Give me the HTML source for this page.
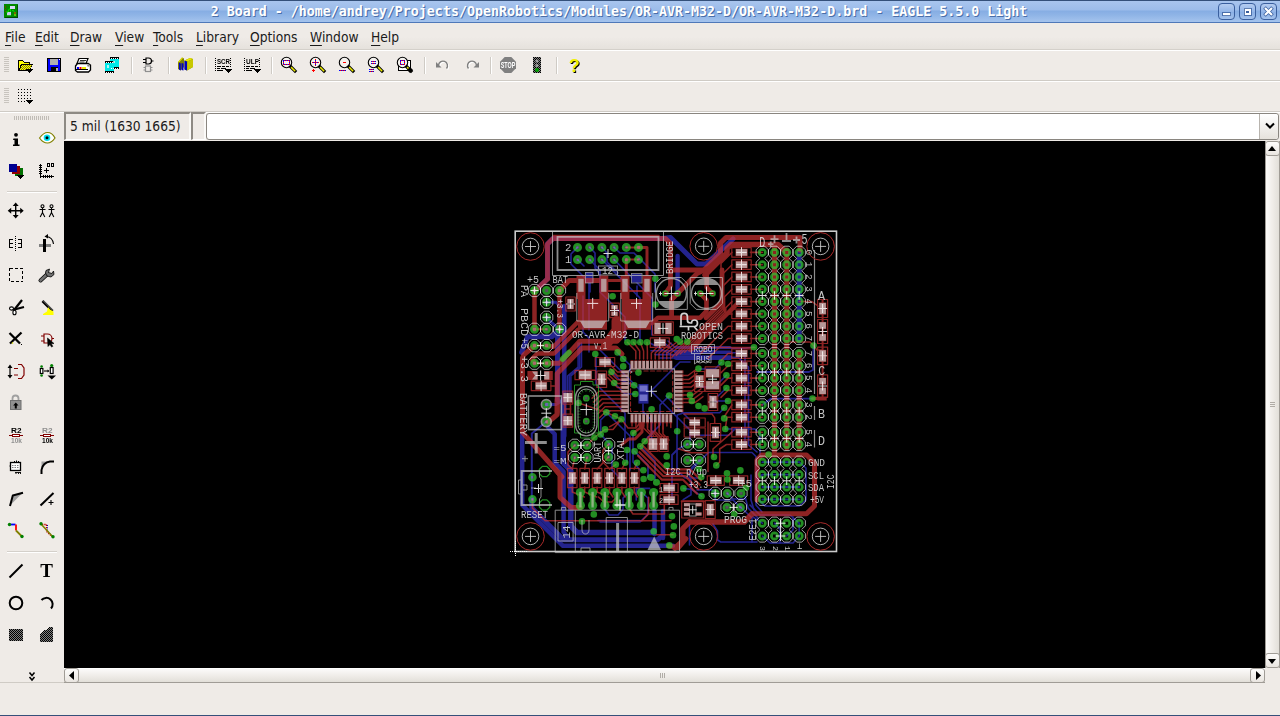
<!DOCTYPE html>
<html><head><meta charset="utf-8"><title>2 Board - EAGLE 5.5.0 Light</title>
<style>
html,body{margin:0;padding:0;}
body{width:1280px;height:716px;overflow:hidden;background:#efebe7;position:relative;font-family:"DejaVu Sans Condensed","DejaVu Sans","Liberation Sans",sans-serif;}
#title{position:absolute;left:0;top:0;width:1280px;height:23px;background:linear-gradient(#34507a 0,#34507a 1px,#a9c5ee 1px,#9cbceA 10px,#86ade3 11px,#8fb4e6 15px,#a4c3ed 21.8px,#4f78b8 21.8px,#4f78b8 22.8px,#e8e4e0 23px);box-sizing:border-box;}
#title .t{position:absolute;left:0;width:1238px;top:4px;text-align:center;font:bold 13.3px "DejaVu Sans Mono","Liberation Mono",monospace;color:#fff;white-space:pre;text-shadow:1px 1px 0 #4a6ea8;}
.wb{position:absolute;top:3px;width:17px;height:17px;border:1px solid #3a5f9e;border-radius:4px;box-sizing:border-box;background:linear-gradient(#b4ccf0,#94b6e8 50%,#88aee4 52%,#a4c2ec);}
#menubar{position:absolute;left:0;top:23px;width:1280px;height:28px;border-bottom:1px solid #fff;box-sizing:border-box;background:linear-gradient(#efebe7 0,#efebe7 14px,#e6e2dd 25.5px,#d4d0ca 26px,#d4d0ca 27px);}
#menubar span{position:absolute;top:6px;font-size:13.7px;line-height:17px;color:#1a1a1a;}
#menubar u{text-decoration:underline;text-underline-offset:2.5px;text-decoration-thickness:1px;}
.hl{position:absolute;left:0;width:1280px;height:1px;}
#coord{position:absolute;left:64px;top:112px;width:127px;height:28px;box-sizing:border-box;border:solid;border-width:2px 2px 1px 2px;border-color:#8e8a84 #fbfaf8 #fff #8e8a84;font-size:13.7px;line-height:24px;padding-left:4px;color:#1a1a1a;white-space:nowrap;}
#cmdl{position:absolute;left:191px;top:112px;width:15px;height:28px;box-sizing:border-box;border:solid;border-width:2px 2px 1px 2px;border-color:#8e8a84 #fbfaf8 #fff #8e8a84;}
#cmd{position:absolute;left:206px;top:112.5px;width:1073px;height:27px;box-sizing:border-box;border:1px solid #8a8680;border-radius:3px;background:#fff;}
#cmd i{position:absolute;right:0;top:0;width:18px;height:25px;background:linear-gradient(#fff,#e6e2dc);border-left:1px solid #b8b4ae;border-radius:0 3px 3px 0;}
#canvas{position:absolute;left:64px;top:141px;width:1201px;height:527px;background:#000;overflow:hidden;}
#vsb{position:absolute;left:1265px;top:141px;width:15px;height:527px;box-sizing:border-box;border-left:1px solid #a09c96;border-right:1px solid #a09c96;background:linear-gradient(90deg,#fbfaf9,#f0ede9 50%,#e2dfd9);}
#hsb{position:absolute;left:64px;top:668px;width:1201px;height:15px;box-sizing:border-box;border-bottom:1px solid #a09c96;border-top:1px solid #fff;background:linear-gradient(#fbfaf9,#f0ede9 50%,#e2dfd9);}
.sbb{position:absolute;width:15px;height:15px;box-sizing:border-box;border:1px solid #a09c96;border-radius:3px;background:linear-gradient(#fdfcfb,#e9e5e0);}
#chrome{position:absolute;left:0;top:0;}
#pcb{position:absolute;left:0;top:0;}
</style></head><body>
<div id="title"><div class="t">2 Board - /home/andrey/Projects/OpenRobotics/Modules/OR-AVR-M32-D/OR-AVR-M32-D.brd - EAGLE 5.5.0 Light</div>
<div class="wb" style="left:1218px"></div><div class="wb" style="left:1239px"></div><div class="wb" style="left:1260px"></div></div>
<div id="menubar">
<span style="left:5px"><u>F</u>ile</span><span style="left:35px"><u>E</u>dit</span><span style="left:70px"><u>D</u>raw</span><span style="left:115px"><u>V</u>iew</span><span style="left:153px"><u>T</u>ools</span><span style="left:196px"><u>L</u>ibrary</span><span style="left:250px"><u>O</u>ptions</span><span style="left:310px"><u>W</u>indow</span><span style="left:371px"><u>H</u>elp</span>
</div>
<div class="hl" style="top:80px;background:#cfcbc5"></div><div class="hl" style="top:81px;background:#fff"></div>
<div class="hl" style="top:111px;background:#cfcbc5"></div><div class="hl" style="top:112px;background:#fff"></div>
<div id="coord">5 mil (1630 1665)</div><div id="cmdl"></div><div id="cmd"><i></i></div>
<div id="canvas">
<svg id="pcb" width="1201" height="527" viewBox="64 141 1201 527">
<g opacity="0.706" stroke="#3232c8" fill="#3232c8" stroke-linecap="round" stroke-linejoin="round"><path d="M799.2 252 L799.2 341" stroke-width="5" fill="none"/><path d="M534.5 290.5 L538 288 L547.5 279 L547.5 244 L553 238.5 L662 238.5 L670.5 237.5 L697 264 L706 264 L733 239" stroke-width="5" fill="none"/><path d="M677.6 256 L677.6 293.5" stroke-width="4.4" fill="none"/><path d="M577.5 247.4 L571 254 L571 264 L590 283 L590 292" stroke-width="1.6" fill="none"/><path d="M577.5 259.6 L584 266" stroke-width="1.6" fill="none"/><path d="M589.7 247.4 L595 253 L595 268 L600 274" stroke-width="1.6" fill="none"/><path d="M601.9 259.6 L640 298 L640 342" stroke-width="1.6" fill="none"/><path d="M614.1 247.4 L620 253 L634 253 L655 274 L655 292" stroke-width="1.6" fill="none"/><path d="M614.1 259.6 L652 298 L652 335" stroke-width="1.6" fill="none"/><path d="M589.7 259.6 L600 270 L600 292 L625 317 L625 340" stroke-width="1.6" fill="none"/><path d="M601.9 247.4 L607 253 L607 262 L618 273" stroke-width="1.6" fill="none"/><rect x="585.5" y="272.5" width="7.5" height="10.5" stroke="none"/><rect x="631.5" y="273.8" width="10" height="8.8" stroke="none"/><path d="M589 283 L589 330" stroke-width="1.6" fill="none"/><path d="M583 296 L583 332 L589 338 L589 352" stroke-width="1.6" fill="none"/><path d="M637 286 L637 296" stroke-width="1.6" fill="none"/><path d="M521.7 352.4 L527.3 336.8 L552 336.8 L559.6 329.3" stroke-width="5" fill="none"/><path d="M557.5 334 L557.5 400" stroke-width="5" fill="none"/><path d="M564.3 306 L564.3 436" stroke-width="4.5" fill="none"/><path d="M546.6 302.3 L556 302.3 L565.3 311" stroke-width="3" fill="none"/><path d="M546.6 317.3 L552 323 L559.6 329.3" stroke-width="3" fill="none"/><path d="M578.1 343 L578.1 367 L567.5 376 L567.5 392" stroke-width="1.5" fill="none"/><path d="M579.8 343 L579.8 367 L569.2 376 L569.2 392" stroke-width="1.5" fill="none"/><path d="M581.5 343 L581.5 367 L570.9 376 L570.9 392" stroke-width="1.5" fill="none"/><path d="M522.2 435 L522.2 505 L563 545.8 L673 545.8" stroke-width="4.5" fill="none"/><path d="M546.3 421.8 L531.8 433.5 L531.8 477" stroke-width="2" fill="none"/><path d="M531.8 477 L531.8 499" stroke-width="2" fill="none"/><path d="M531.8 499 L531.8 508 L563.6 539.8 L657.6 539.8 L663 535" stroke-width="5" fill="none"/><path d="M548.5 428 L554.7 434 L554.7 462.6 L563.6 471.5 L563.6 532 L569 539" stroke-width="4.5" fill="none"/><path d="M563.3 400 L563.3 463 L570.8 470.5 L570.8 526 L577 532.5 L653 532.5" stroke-width="5.5" fill="none"/><path d="M546.3 404.5 L556 404.5 L563 400" stroke-width="3" fill="none"/><path d="M654.5 511 L654.5 534" stroke-width="4.5" fill="none"/><path d="M663 511 L663 538" stroke-width="4.5" fill="none"/><path d="M636.3 500 L636.3 488.4 L649.7 488.4" stroke-width="1.6" fill="none"/><path d="M604.7 509 L609 515 L618 515 L623 509 L623 498 L629.1 492" stroke-width="1.6" fill="none"/><path d="M641.3 492 L648 498 L648 514 L640 522 L600 522" stroke-width="1.6" fill="none"/><path d="M598 520.5 L640 520.5" stroke-width="1.6" fill="none"/><path d="M676 347.5 L730 347.5" stroke-width="3.2" fill="none"/><path d="M676 352.2 L730 352.2" stroke-width="3.5" fill="none"/><path d="M676 357.6 L730 357.6" stroke-width="4.6" fill="none"/><path d="M676 348.2 L668 341" stroke-width="1.6" fill="none"/><path d="M676 352.7 L662 341" stroke-width="1.6" fill="none"/><path d="M676 357.2 L650 343" stroke-width="1.6" fill="none"/><path d="M731 348.2 L745 348.2 L754 347" stroke-width="1.6" fill="none"/><path d="M731 352.7 L742 352.7 L745 356 L745 445" stroke-width="1.6" fill="none"/><path d="M731 357.2 L738 357.2 L748.5 367 L748.5 445 L757 452" stroke-width="1.6" fill="none"/><path d="M651 350.7 L716 350.7" stroke-width="1.6" fill="none"/><path d="M655 354.6 L700 354.6" stroke-width="1.6" fill="none"/><path d="M660 358 L700 358" stroke-width="1.6" fill="none"/><rect x="638.4" y="384" width="10.1" height="19.6" stroke="none"/><path d="M651 391 L680 362 L690 362" stroke-width="1.6" fill="none"/><path d="M651 391 L690 430 L690 444" stroke-width="1.6" fill="none"/><path d="M643 404 L643 412 L651.6 420 L651.6 440" stroke-width="1.6" fill="none"/><path d="M600 350 L640 390" stroke-width="1.6" fill="none"/><path d="M596 356 L596 384 L625 413 L625 440" stroke-width="1.6" fill="none"/><path d="M606 412 L630 436 L630 470" stroke-width="1.6" fill="none"/><path d="M600 434 L612 446 L612 470 L620 478" stroke-width="1.6" fill="none"/><path d="M633 433 L633 462 L640 470" stroke-width="1.6" fill="none"/><path d="M666 396 L690 420" stroke-width="1.6" fill="none"/><path d="M677 431 L677 470 L685 478 L700 478" stroke-width="1.6" fill="none"/><path d="M617 352.5 L630 365 L630 372" stroke-width="1.6" fill="none"/><path d="M611.5 372 L620 380 L634 385" stroke-width="1.6" fill="none"/><path d="M614.2 383 L625 394 L635 394" stroke-width="1.6" fill="none"/><path d="M669 396 L660 405 L660 425 L648 437 L644.7 441.3" stroke-width="1.6" fill="none"/><path d="M600.7 434.4 L600.7 420 L610 411" stroke-width="1.6" fill="none"/><path d="M640.3 446.3 L655 461 L655 480" stroke-width="1.6" fill="none"/><path d="M634.6 451.4 L648 465 L648 477" stroke-width="1.6" fill="none"/><path d="M627 450 L627 462.7" stroke-width="1.6" fill="none"/><path d="M812.5 398.6 L771 398.6 L762.3 404.9" stroke-width="1.8" fill="none"/><path d="M813.5 345.6 L813 370 L809 372 L757 372" stroke-width="1.8" fill="none"/><path d="M684 412.8 L719.7 412.8 L724.2 407.8" stroke-width="1.6" fill="none"/><path d="M691.8 435.2 L728.6 435.2 L736 428" stroke-width="1.6" fill="none"/><path d="M689.5 471.5 L708.5 452.5 L752 452.5 L756 456.5 L756 505 L762 512" stroke-width="1.6" fill="none"/><path d="M728 401 L715 401 L710 396" stroke-width="1.6" fill="none"/><path d="M726.4 375.3 L715 387 L700 387" stroke-width="1.6" fill="none"/><path d="M726.4 388 L718 396" stroke-width="1.6" fill="none"/><path d="M721.4 362.5 L715 369 L700 369" stroke-width="1.6" fill="none"/><path d="M687.5 444.3 L678 449 L672 455 L672 500" stroke-width="1.8" fill="none"/><path d="M699.3 460.3 L692 467.4 L689 475.2 L691 480 L691 494.7 L683.2 499.6" stroke-width="1.6" fill="none"/><path d="M697 489.9 L712 489.9 L715.2 493.4" stroke-width="1.6" fill="none"/><path d="M677.2 431.3 L677.2 415 L684 412.8" stroke-width="1.6" fill="none"/><path d="M725.3 429 L755 429 L760 434 L760 455" stroke-width="1.6" fill="none"/><path d="M762.3 462.2 L799.2 462.2" stroke-width="1.8" fill="none"/><path d="M762.3 474.6 L799.2 474.6" stroke-width="1.8" fill="none"/><path d="M762.3 487 L799.2 487" stroke-width="1.8" fill="none"/><path d="M762.3 499.3 L799.2 499.3" stroke-width="1.8" fill="none"/><path d="M799.2 462.2 L806 468 L806 500 L799.2 506 L765 506 L757 498 L757 470" stroke-width="1.6" fill="none"/><path d="M762.3 474.6 L757 480" stroke-width="1.6" fill="none"/><path d="M753 517 L762.3 523.2" stroke-width="1.6" fill="none"/><path d="M762.3 536 L770 543 L793 543 L799.2 536 L799.2 523.2" stroke-width="1.6" fill="none"/><path d="M774.5 523.2 L780 529 L780 543" stroke-width="1.6" fill="none"/><path d="M786.7 536 L793 530 L793 517" stroke-width="1.6" fill="none"/><path d="M750 505 L760 515 L790 515 L799.2 523.2" stroke-width="1.6" fill="none"/><path d="M745 496 L748 508 L758 518" stroke-width="1.6" fill="none"/><path d="M751 475 L751 500 L754 510" stroke-width="1.6" fill="none"/><path d="M689.5 525 L689.5 545" stroke-width="1.6" fill="none"/><path d="M713 524 L717.5 531 L717.5 540 L720.8 542 L757 542" stroke-width="1.6" fill="none"/><path d="M741 507.4 L752 518 L752 542" stroke-width="1.6" fill="none"/><path d="M727.3 493.4 L733 499 L745 499" stroke-width="1.6" fill="none"/><path d="M715.2 493.4 L715.2 500 L733 500 L740.4 507.4" stroke-width="1.6" fill="none"/><path d="M691.8 489.5 L683.4 488.4" stroke-width="1.6" fill="none"/><path d="M701.5 496.2 L691.8 489.5 L690 480" stroke-width="1.6" fill="none"/></g>
<g opacity="0.706" stroke="#c83232" fill="#c83232" stroke-linecap="round" stroke-linejoin="round"><path d="M547.5 279 L547.5 244 L553 238.5 L665.5 238.5 L670.5 243.5 L670.5 286 L665.3 293.5" stroke-width="4.8" fill="none"/><path d="M553 235.5 L659 235.5" stroke-width="1.5" fill="none"/><path d="M547.5 279 L538 288 L534.5 290.5" stroke-width="5" fill="none"/><path d="M534.5 290.5 L534.5 329.3" stroke-width="4.5" fill="none"/><path d="M559.5 290.5 L559.5 329.3" stroke-width="4.5" fill="none"/><path d="M559.5 290.5 L569 280.5 L603 280.5" stroke-width="5" fill="none"/><path d="M638.5 247.4 L647 247.4 L647 276" stroke-width="3" fill="none"/><path d="M626.3 247.4 L638.5 247.4" stroke-width="2" fill="none"/><path d="M626.3 259.6 L638.5 259.6" stroke-width="2" fill="none"/><path d="M626.3 259.6 L626.3 276" stroke-width="3" fill="none"/><rect x="578" y="299" width="29" height="30.7" stroke="none"/><rect x="622" y="299" width="29" height="30.7" stroke="none"/><rect x="576.5" y="275.5" width="9" height="23.5" stroke="none"/><rect x="599.3" y="275.5" width="9" height="23.5" stroke="none"/><rect x="620.5" y="275.5" width="9" height="23.5" stroke="none"/><rect x="642.5" y="275.5" width="9" height="23.5" stroke="none"/><path d="M603.8 280.5 L625 280.5" stroke-width="3" fill="none"/><path d="M603.8 291 L647 291" stroke-width="2" fill="none"/><path d="M546.6 345.6 L553.5 346.8 L577.6 322.2" stroke-width="4.5" fill="none"/><path d="M534.5 363.2 L531.8 359 L537.3 353.5 L554 353.5 L577.6 330" stroke-width="4.5" fill="none"/><path d="M546.6 363.2 L559.7 363.2 L579.8 341.2 L617 341.2 L624 334 L624 320" stroke-width="5" fill="none"/><path d="M557.2 412 L557.2 373.6 L582 348 L616 348 L622 354" stroke-width="5" fill="none"/><path d="M616.5 321 L616.5 330 L606 345" stroke-width="10" fill="none"/><path d="M534.5 345.6 L531.8 348 L524 354.6 L522.5 358 L522.5 432.4 L562 477" stroke-width="5" fill="none"/><path d="M534.5 329.3 L546.6 329.3" stroke-width="2" fill="none"/><path d="M534.5 345.6 L546.6 345.6" stroke-width="2" fill="none"/><path d="M534.5 363.2 L546.6 363.2" stroke-width="2" fill="none"/><path d="M557.2 400 L557.2 414.5 L552 419 L548 422" stroke-width="5" fill="none"/><path d="M556 470 L560 475 L560 497.3 L570.9 507.4 L580.4 507.4" stroke-width="5" fill="none"/><path d="M532.4 499.3 L532.4 508 L545.2 520.8 L671 520.8" stroke-width="1.6" fill="none"/><path d="M670.5 270 L704 270 L720.5 253.5 L720.5 243 L726 237.5 L800 237.5 L800 250" stroke-width="5" fill="none"/><path d="M705 275 L727 253 L727 248.5 L731 244.5 L778 244.5 L786.7 252.4" stroke-width="5.5" fill="none"/><path d="M774.5 245 L774.5 451" stroke-width="5" fill="none"/><path d="M786.7 250 L786.7 448" stroke-width="5" fill="none"/><path d="M799.2 353 L799.2 448" stroke-width="5" fill="none"/><path d="M750.5 252.4 L762.3 252.4" stroke-width="1.6" fill="none"/><path d="M750.5 264.7 L762.3 264.7" stroke-width="1.6" fill="none"/><path d="M750.5 277 L762.3 277" stroke-width="1.6" fill="none"/><path d="M750.5 289.3 L762.3 289.3" stroke-width="1.6" fill="none"/><path d="M750.5 301.6 L762.3 301.6" stroke-width="1.6" fill="none"/><path d="M750.5 313.9 L762.3 313.9" stroke-width="1.6" fill="none"/><path d="M750.5 326.2 L762.3 326.2" stroke-width="1.6" fill="none"/><path d="M750.5 338.5 L762.3 338.5" stroke-width="1.6" fill="none"/><path d="M750.5 353.5 L762.3 353.5" stroke-width="1.6" fill="none"/><path d="M750.5 365.8 L762.3 365.8" stroke-width="1.6" fill="none"/><path d="M750.5 378.1 L762.3 378.1" stroke-width="1.6" fill="none"/><path d="M750.5 390.4 L762.3 390.4" stroke-width="1.6" fill="none"/><path d="M750.5 404.9 L762.3 404.9" stroke-width="1.6" fill="none"/><path d="M750.5 417.2 L762.3 417.2" stroke-width="1.6" fill="none"/><path d="M750.5 432.2 L762.3 432.2" stroke-width="1.6" fill="none"/><path d="M750.5 444.5 L762.3 444.5" stroke-width="1.6" fill="none"/><path d="M732 252.4 L721 263.4 L721 308 L672 357" stroke-width="1.5" fill="none"/><path d="M732 264.7 L722.2 274.5 L722.2 309.4 L676.2 355.4" stroke-width="1.5" fill="none"/><path d="M732 277 L723.4 285.6 L723.4 310.8 L680.4 353.8" stroke-width="1.5" fill="none"/><path d="M732 289.3 L724.6 296.7 L724.6 312.2 L684.6 352.2" stroke-width="1.5" fill="none"/><path d="M732 301.6 L725.8 307.8 L725.8 313.6 L688.8 350.6" stroke-width="1.5" fill="none"/><path d="M732 313.9 L728 313.9 L693 348.9" stroke-width="1.5" fill="none"/><path d="M732 326.2 L728 326.2 L700.5 353.7" stroke-width="1.5" fill="none"/><path d="M732 338.5 L728 338.5 L708 358.5" stroke-width="1.5" fill="none"/><path d="M732 353.5 L728 353.5 L721 360.5" stroke-width="1.6" fill="none"/><path d="M732 365.8 L728 365.8 L721 372.8" stroke-width="1.6" fill="none"/><path d="M732 378.1 L728 378.1 L721 385.1" stroke-width="1.6" fill="none"/><path d="M732 390.4 L728 390.4 L721 397.4" stroke-width="1.6" fill="none"/><path d="M732 404.9 L724.2 416.8" stroke-width="1.6" fill="none"/><path d="M732 417.2 L727 417.2 L725.3 429" stroke-width="1.6" fill="none"/><path d="M732 432.2 L713 449 L713 457" stroke-width="1.6" fill="none"/><path d="M732 444.5 L726.4 444.5 L719.7 449 L719.7 462 L716.3 465.4" stroke-width="1.6" fill="none"/><path d="M697 347.4 L755 347.4" stroke-width="1.5" fill="none"/><path d="M704 270 L697 273.5 L677.6 293.5 L671.6 299.5 L671.6 317.8" stroke-width="4.8" fill="none"/><path d="M712.6 293.5 L706.7 287.5 L706.7 270" stroke-width="4.6" fill="none"/><path d="M700.3 293.5 L706.5 300 L706.5 311 L700 317.8 L658 317.8 L652 323" stroke-width="4.6" fill="none"/><path d="M722 270 L722 302 L706 317.8" stroke-width="4.8" fill="none"/><path d="M690.8 350 L736 305" stroke-width="4.5" fill="none"/><path d="M757 500 L757 460 L761.5 455 L806.5 455 L814.5 463 L814.5 506 L806.5 513.8 L753 513.8" stroke-width="5" fill="none"/><path d="M689.5 522 L744.3 522 L752 513.8" stroke-width="5.5" fill="none"/><path d="M689.5 522 L682.8 528.6 L682.8 541 L675 548" stroke-width="5.5" fill="none"/><path d="M686 538.7 L678.4 547.6 L669 546" stroke-width="5" fill="none"/><path d="M629.6 509 L633 514 L664.3 514 L664.3 505" stroke-width="1.6" fill="none"/><path d="M648.6 497.3 L648.6 514 L642 520.8" stroke-width="1.6" fill="none"/><path d="M656.5 534.8 L673 534.8" stroke-width="1.6" fill="none"/><path d="M572.3 487 L572.3 492 L584.4 497" stroke-width="1.6" fill="none"/><path d="M584.7 487 L584.7 492 L596.6 497" stroke-width="1.6" fill="none"/><path d="M597.1 487 L597.1 492 L608.8 497" stroke-width="1.6" fill="none"/><path d="M609.5 487 L609.5 492 L613 497" stroke-width="1.6" fill="none"/><path d="M621.9 487 L621.9 492 L625.2 497" stroke-width="1.6" fill="none"/><path d="M634.3 487 L634.3 492 L637.4 497" stroke-width="1.6" fill="none"/><path d="M598.4 497 L604 502 L612 502 L617 497" stroke-width="1.6" fill="none"/><path d="M627.4 342.3 L635.8 351 L635.8 359" stroke-width="1.5" fill="none"/><path d="M633.5 342.3 L639.7 351 L639.7 359" stroke-width="1.5" fill="none"/><path d="M640.3 342.3 L643.6 351 L643.6 359" stroke-width="1.5" fill="none"/><path d="M647 342.3 L647.4 351 L647.4 359" stroke-width="1.5" fill="none"/><path d="M651.3 359 L651.3 353 L659.3 345" stroke-width="1.5" fill="none"/><path d="M655.2 359 L655.2 353 L665.2 344" stroke-width="1.5" fill="none"/><path d="M659 359 L659 353 L671 343" stroke-width="1.5" fill="none"/><path d="M662.9 359 L662.9 353 L676.9 342" stroke-width="1.5" fill="none"/><path d="M666.8 359 L666.8 353 L682.8 341" stroke-width="1.5" fill="none"/><path d="M670.6 359 L670.6 353 L688.6 340" stroke-width="1.5" fill="none"/><path d="M621 372 L617.5 372 L611 365.5" stroke-width="1.5" fill="none"/><path d="M621 375.9 L617.5 375.9 L610.2 368.6" stroke-width="1.5" fill="none"/><path d="M621 379.7 L617.5 379.7 L609.4 371.6" stroke-width="1.5" fill="none"/><path d="M621 383.6 L617.5 383.6 L608.6 374.7" stroke-width="1.5" fill="none"/><path d="M621 387.5 L617.5 387.5 L607.8 377.8" stroke-width="1.5" fill="none"/><path d="M621 391.3 L599 391.3 L592 398.3" stroke-width="1.5" fill="none"/><path d="M621 395.2 L600.5 395.2 L593.5 402.2" stroke-width="1.5" fill="none"/><path d="M621 399 L602 399 L595 406" stroke-width="1.5" fill="none"/><path d="M621 402.9 L603.5 402.9 L596.5 409.9" stroke-width="1.5" fill="none"/><path d="M621 406.8 L605 406.8 L598 413.8" stroke-width="1.5" fill="none"/><path d="M621 410.7 L606.5 410.7 L599.5 417.7" stroke-width="1.5" fill="none"/><path d="M608.6 457 L597.2 469" stroke-width="1.6" fill="none"/><path d="M608.6 444.5 L603 450 L603 462 L609.6 469" stroke-width="1.6" fill="none"/><path d="M625.2 462.7 L622 469" stroke-width="1.6" fill="none"/><path d="M637 462.7 L634.3 469" stroke-width="1.6" fill="none"/><path d="M615.8 464.6 L609.6 469" stroke-width="1.6" fill="none"/><path d="M587 445.3 L594.4 437.5" stroke-width="1.6" fill="none"/><path d="M574.8 457.5 L572.3 469" stroke-width="1.6" fill="none"/><path d="M587 457.5 L584.7 469" stroke-width="1.6" fill="none"/><path d="M574.8 445.3 L568 452 L568 465 L572.3 469" stroke-width="1.5" fill="none"/><path d="M609.5 426.8 L617.3 422.3 L621.4 419.3" stroke-width="1.5" fill="none"/><path d="M633.4 433 L640 428 L640 423" stroke-width="2.5" fill="none"/><path d="M644.7 441.3 L651 435 L651.4 423" stroke-width="1.5" fill="none"/><path d="M640.3 446.3 L655.3 431 L655.3 423" stroke-width="1.5" fill="none"/><path d="M642.3 445.3 L666.3 469.3 L690 469.3 L701 480.3" stroke-width="2.2" fill="none"/><path d="M640.9 448.8 L664.9 472.8 L687.7 472.8 L699.7 484.8" stroke-width="2.2" fill="none"/><path d="M639.4 452.2 L663.4 476.2 L685.4 476.2 L698.4 489.2" stroke-width="2.2" fill="none"/><path d="M638 455.7 L662 479.7 L683.1 479.7 L697.1 493.7" stroke-width="2.2" fill="none"/><path d="M678.3 448.8 L691 452.7 L708 452.7" stroke-width="1.6" fill="none"/><path d="M632 423 L632 426" stroke-width="1.5" fill="none"/><path d="M635.9 423 L635.9 427.5" stroke-width="1.5" fill="none"/><path d="M639.8 423 L639.8 429" stroke-width="1.5" fill="none"/><path d="M643.7 423 L643.7 426" stroke-width="1.5" fill="none"/><path d="M647.5 423 L647.5 427.5" stroke-width="1.5" fill="none"/><path d="M651.4 423 L651.4 429" stroke-width="1.5" fill="none"/><path d="M655.3 423 L655.3 426" stroke-width="1.5" fill="none"/><path d="M659.1 423 L659.1 427.5" stroke-width="1.5" fill="none"/><path d="M663 423 L663 429" stroke-width="1.5" fill="none"/><path d="M666.9 423 L666.9 426" stroke-width="1.5" fill="none"/><path d="M670.8 423 L670.8 427.5" stroke-width="1.5" fill="none"/><path d="M643.6 423 L643.6 428 L649.6 434" stroke-width="1.5" fill="none"/><path d="M647.5 423 L647.5 429.2 L653.5 435.2" stroke-width="1.5" fill="none"/><path d="M651.3 423 L651.3 430.4 L657.3 436.4" stroke-width="1.5" fill="none"/><path d="M655.2 423 L655.2 431.6 L661.2 437.6" stroke-width="1.5" fill="none"/><path d="M659.1 423 L659.1 432.8 L665.1 438.8" stroke-width="1.5" fill="none"/><path d="M663 423 L663 434 L669 440" stroke-width="1.5" fill="none"/><path d="M621.8 444.7 L628.5 439 L635 439 L642 432 L642 423" stroke-width="3" fill="none"/><path d="M594.4 437.5 L605 429.4 L613 429.4 L621.4 419.3" stroke-width="1.5" fill="none"/><path d="M578.6 403 L606.3 412.4 L615 416.2 L621.4 419.3 L628 428 L636 428 L639.7 423" stroke-width="1.5" fill="none"/><path d="M683 375.5 L688 375.5 L696 369.5" stroke-width="1.5" fill="none"/><path d="M683 379.4 L689 379.4 L697 373.4" stroke-width="1.5" fill="none"/><path d="M683 383.2 L690 383.2 L698 377.2" stroke-width="1.5" fill="none"/><path d="M683 387.1 L691 387.1 L699 381.1" stroke-width="1.5" fill="none"/><path d="M683 391 L692 391 L700 385" stroke-width="1.5" fill="none"/><path d="M683 394.9 L693 394.9 L701 388.9" stroke-width="1.5" fill="none"/><path d="M683 398.7 L694 398.7 L702 392.7" stroke-width="1.5" fill="none"/><path d="M683 402.6 L695 402.6 L703 396.6" stroke-width="1.5" fill="none"/><path d="M684 414 L712 414 L714.7 417.9 L714.7 423" stroke-width="1.5" fill="none"/><path d="M708 422 L708 471.5" stroke-width="1.5" fill="none"/><path d="M681.7 501.3 L704 501.3" stroke-width="2" fill="none"/><path d="M813.5 345.6 L810 342 L790 342" stroke-width="1.5" fill="none"/><path d="M813.5 345.6 L817 350 L822 350" stroke-width="1.5" fill="none"/><path d="M812.5 398.6 L822 398.6" stroke-width="3" fill="none"/><path d="M799.2 301.6 L812 301.6 L818 306" stroke-width="1.5" fill="none"/><path d="M822.6 300 L822.6 398" stroke-width="2" fill="none"/><path d="M580.4 494V505" stroke-width="2" fill="none"/><path d="M592.6 494V505" stroke-width="2" fill="none"/><path d="M604.8 494V505" stroke-width="2" fill="none"/><path d="M617 494V505" stroke-width="2" fill="none"/><path d="M629.2 494V505" stroke-width="2" fill="none"/><path d="M641.4 494V505" stroke-width="2" fill="none"/><path d="M653.6 494V505" stroke-width="2" fill="none"/><rect x="731.8" y="247.7" width="19.4" height="9.5" fill="none" stroke-width="1.2"/><rect x="735.5" y="248.7" width="6.1" height="7.4" stroke="none"/><rect x="741.5" y="248.7" width="6.1" height="7.4" stroke="none"/><rect x="731.8" y="259.9" width="19.4" height="9.5" fill="none" stroke-width="1.2"/><rect x="735.5" y="261" width="6.1" height="7.4" stroke="none"/><rect x="741.5" y="261" width="6.1" height="7.4" stroke="none"/><rect x="731.8" y="272.2" width="19.4" height="9.5" fill="none" stroke-width="1.2"/><rect x="735.5" y="273.3" width="6.1" height="7.4" stroke="none"/><rect x="741.5" y="273.3" width="6.1" height="7.4" stroke="none"/><rect x="731.8" y="284.6" width="19.4" height="9.5" fill="none" stroke-width="1.2"/><rect x="735.5" y="285.6" width="6.1" height="7.4" stroke="none"/><rect x="741.5" y="285.6" width="6.1" height="7.4" stroke="none"/><rect x="731.8" y="296.9" width="19.4" height="9.5" fill="none" stroke-width="1.2"/><rect x="735.5" y="297.9" width="6.1" height="7.4" stroke="none"/><rect x="741.5" y="297.9" width="6.1" height="7.4" stroke="none"/><rect x="731.8" y="309.1" width="19.4" height="9.5" fill="none" stroke-width="1.2"/><rect x="735.5" y="310.2" width="6.1" height="7.4" stroke="none"/><rect x="741.5" y="310.2" width="6.1" height="7.4" stroke="none"/><rect x="731.8" y="321.4" width="19.4" height="9.5" fill="none" stroke-width="1.2"/><rect x="735.5" y="322.5" width="6.1" height="7.4" stroke="none"/><rect x="741.5" y="322.5" width="6.1" height="7.4" stroke="none"/><rect x="731.8" y="333.8" width="19.4" height="9.5" fill="none" stroke-width="1.2"/><rect x="735.5" y="334.8" width="6.1" height="7.4" stroke="none"/><rect x="741.5" y="334.8" width="6.1" height="7.4" stroke="none"/><rect x="731.8" y="348.8" width="19.4" height="9.5" fill="none" stroke-width="1.2"/><rect x="735.5" y="349.8" width="6.1" height="7.4" stroke="none"/><rect x="741.5" y="349.8" width="6.1" height="7.4" stroke="none"/><rect x="731.8" y="361.1" width="19.4" height="9.5" fill="none" stroke-width="1.2"/><rect x="735.5" y="362.1" width="6.1" height="7.4" stroke="none"/><rect x="741.5" y="362.1" width="6.1" height="7.4" stroke="none"/><rect x="731.8" y="373.4" width="19.4" height="9.5" fill="none" stroke-width="1.2"/><rect x="735.5" y="374.4" width="6.1" height="7.4" stroke="none"/><rect x="741.5" y="374.4" width="6.1" height="7.4" stroke="none"/><rect x="731.8" y="385.6" width="19.4" height="9.5" fill="none" stroke-width="1.2"/><rect x="735.5" y="386.7" width="6.1" height="7.4" stroke="none"/><rect x="741.5" y="386.7" width="6.1" height="7.4" stroke="none"/><rect x="731.8" y="400.1" width="19.4" height="9.5" fill="none" stroke-width="1.2"/><rect x="735.5" y="401.2" width="6.1" height="7.4" stroke="none"/><rect x="741.5" y="401.2" width="6.1" height="7.4" stroke="none"/><rect x="731.8" y="412.4" width="19.4" height="9.5" fill="none" stroke-width="1.2"/><rect x="735.5" y="413.5" width="6.1" height="7.4" stroke="none"/><rect x="741.5" y="413.5" width="6.1" height="7.4" stroke="none"/><rect x="731.8" y="427.4" width="19.4" height="9.5" fill="none" stroke-width="1.2"/><rect x="735.5" y="428.5" width="6.1" height="7.4" stroke="none"/><rect x="741.5" y="428.5" width="6.1" height="7.4" stroke="none"/><rect x="731.8" y="439.8" width="19.4" height="9.5" fill="none" stroke-width="1.2"/><rect x="735.5" y="440.8" width="6.1" height="7.4" stroke="none"/><rect x="741.5" y="440.8" width="6.1" height="7.4" stroke="none"/><rect x="567.5" y="468.3" width="9.5" height="19.4" fill="none" stroke-width="1.2"/><rect x="568.6" y="472" width="7.4" height="6.1" stroke="none"/><rect x="568.6" y="478" width="7.4" height="6.1" stroke="none"/><rect x="579.9" y="468.3" width="9.5" height="19.4" fill="none" stroke-width="1.2"/><rect x="581" y="472" width="7.4" height="6.1" stroke="none"/><rect x="581" y="478" width="7.4" height="6.1" stroke="none"/><rect x="592.3" y="468.3" width="9.5" height="19.4" fill="none" stroke-width="1.2"/><rect x="593.4" y="472" width="7.4" height="6.1" stroke="none"/><rect x="593.4" y="478" width="7.4" height="6.1" stroke="none"/><rect x="604.8" y="468.3" width="9.5" height="19.4" fill="none" stroke-width="1.2"/><rect x="605.8" y="472" width="7.4" height="6.1" stroke="none"/><rect x="605.8" y="478" width="7.4" height="6.1" stroke="none"/><rect x="617.1" y="468.3" width="9.5" height="19.4" fill="none" stroke-width="1.2"/><rect x="618.2" y="472" width="7.4" height="6.1" stroke="none"/><rect x="618.2" y="478" width="7.4" height="6.1" stroke="none"/><rect x="629.5" y="468.3" width="9.5" height="19.4" fill="none" stroke-width="1.2"/><rect x="630.6" y="472" width="7.4" height="6.1" stroke="none"/><rect x="630.6" y="478" width="7.4" height="6.1" stroke="none"/><rect x="707.3" y="475.8" width="17" height="9.5" fill="none" stroke-width="1.2"/><rect x="709.8" y="476.8" width="6.1" height="7.4" stroke="none"/><rect x="715.8" y="476.8" width="6.1" height="7.4" stroke="none"/><rect x="729.7" y="475.8" width="18" height="9.5" fill="none" stroke-width="1.2"/><rect x="732.7" y="476.8" width="6.1" height="7.4" stroke="none"/><rect x="738.7" y="476.8" width="6.1" height="7.4" stroke="none"/><rect x="648.1" y="436.5" width="9.8" height="15" fill="none" stroke-width="1.2"/><rect x="648.4" y="438" width="9.2" height="6.1" stroke="none"/><rect x="648.4" y="444" width="9.2" height="6.1" stroke="none"/><rect x="659.1" y="436.5" width="9" height="15" fill="none" stroke-width="1.2"/><rect x="659.5" y="438" width="8.2" height="6.1" stroke="none"/><rect x="659.5" y="444" width="8.2" height="6.1" stroke="none"/><rect x="684.2" y="418" width="21" height="9" fill="none" stroke-width="1.2"/><rect x="689.2" y="419.1" width="5.5" height="6.8" stroke="none"/><rect x="694.7" y="419.1" width="5.5" height="6.8" stroke="none"/><rect x="684.2" y="428" width="21" height="9" fill="none" stroke-width="1.2"/><rect x="689.2" y="429.1" width="5.5" height="6.8" stroke="none"/><rect x="694.7" y="429.1" width="5.5" height="6.8" stroke="none"/><rect x="710.2" y="423.5" width="10.5" height="17.8" fill="none" stroke-width="1.2"/><rect x="711.8" y="426.4" width="7.4" height="6.1" stroke="none"/><rect x="711.8" y="432.4" width="7.4" height="6.1" stroke="none"/><rect x="705.1" y="366.9" width="15" height="24.5" fill="none" stroke-width="1.2"/><rect x="705.7" y="368.8" width="13.8" height="8.8" stroke="none"/><rect x="705.7" y="380.8" width="13.8" height="8.8" stroke="none"/><rect x="694.5" y="371.5" width="10" height="20" fill="none" stroke-width="1.2"/><rect x="695.2" y="375.1" width="8.6" height="5.8" stroke="none"/><rect x="695.2" y="382.1" width="8.6" height="5.8" stroke="none"/><rect x="708.2" y="393.5" width="9.5" height="17" fill="none" stroke-width="1.2"/><rect x="709.1" y="395.6" width="7.8" height="5.8" stroke="none"/><rect x="709.1" y="402.6" width="7.8" height="5.8" stroke="none"/><rect x="660.1" y="483.5" width="18" height="9" fill="none" stroke-width="1.2"/><rect x="663.1" y="484.3" width="6.1" height="7.4" stroke="none"/><rect x="669.1" y="484.3" width="6.1" height="7.4" stroke="none"/><rect x="660.1" y="494.9" width="18" height="9.5" fill="none" stroke-width="1.2"/><rect x="663.1" y="496" width="6.1" height="7.4" stroke="none"/><rect x="669.1" y="496" width="6.1" height="7.4" stroke="none"/><rect x="705.2" y="500.7" width="10" height="17.8" fill="none" stroke-width="1.2"/><rect x="706.5" y="503.6" width="7.4" height="6.1" stroke="none"/><rect x="706.5" y="509.6" width="7.4" height="6.1" stroke="none"/><rect x="681.7" y="501.3" width="21.8" height="16.7" fill="none" stroke-width="1.2"/><rect x="683.8" y="503" width="6" height="3.4" stroke="none"/><rect x="683.8" y="507.7" width="6" height="3.4" stroke="none"/><rect x="683.8" y="512.3" width="6" height="3.4" stroke="none"/><rect x="695.7" y="503" width="6" height="3.4" stroke="none"/><rect x="695.7" y="512.3" width="6" height="3.4" stroke="none"/><rect x="527.4" y="371" width="10.2" height="9" stroke="none"/><rect x="544.2" y="371" width="8.6" height="9" stroke="none"/><rect x="531.3" y="381.2" width="19.6" height="9.4" fill="none" stroke-width="1.2"/><rect x="535.2" y="382" width="6.1" height="7.8" stroke="none"/><rect x="541" y="382" width="6.1" height="7.8" stroke="none"/><path d="M551 385.9 L556 385.9" stroke-width="1.5" fill="none"/><rect x="562.9" y="391.1" width="9.8" height="13" fill="none" stroke-width="1.2"/><rect x="563" y="392.6" width="9.6" height="5.1" stroke="none"/><rect x="563" y="397.6" width="9.6" height="5.1" stroke="none"/><rect x="562.9" y="414.2" width="9.8" height="13" fill="none" stroke-width="1.2"/><rect x="563" y="415.7" width="9.6" height="5.1" stroke="none"/><rect x="563" y="420.7" width="9.6" height="5.1" stroke="none"/><path d="M565 404 L565 414" stroke-width="1.6" fill="none"/><path d="M570.5 404 L570.5 414" stroke-width="1.6" fill="none"/><path d="M565 409 L570.5 409" stroke-width="1.6" fill="none"/><rect x="595.2" y="357.5" width="19.5" height="9" fill="none" stroke-width="1.2"/><rect x="599" y="358.3" width="6.1" height="7.4" stroke="none"/><rect x="605" y="358.3" width="6.1" height="7.4" stroke="none"/><rect x="575" y="370.4" width="20.4" height="9.3" fill="none" stroke-width="1.2"/><rect x="578.5" y="370.6" width="6.8" height="8.8" stroke="none"/><rect x="585.1" y="370.6" width="6.8" height="8.8" stroke="none"/><rect x="596.9" y="371" width="9.7" height="16.4" fill="none" stroke-width="1.2"/><rect x="597.9" y="373.2" width="7.8" height="6.1" stroke="none"/><rect x="597.9" y="379.1" width="7.8" height="6.1" stroke="none"/><rect x="652.6" y="321.8" width="20.7" height="13.3" fill="none" stroke-width="1.2"/><rect x="654.1" y="322.5" width="6.8" height="11.8" stroke="none"/><rect x="665.1" y="322.5" width="6.8" height="11.8" stroke="none"/><rect x="650.3" y="337.9" width="19" height="9.5" fill="none" stroke-width="1.2"/><rect x="653.8" y="338.9" width="6.1" height="7.4" stroke="none"/><rect x="659.8" y="338.9" width="6.1" height="7.4" stroke="none"/><rect x="565.8" y="297" width="9.5" height="14" fill="none" stroke-width="1.2"/><rect x="567.1" y="298.6" width="6.8" height="4.8" stroke="none"/><rect x="567.1" y="304.6" width="6.8" height="4.8" stroke="none"/><rect x="609.8" y="303.2" width="9.5" height="14.5" fill="none" stroke-width="1.2"/><rect x="611.1" y="304.9" width="6.8" height="4.8" stroke="none"/><rect x="611.1" y="311.4" width="6.8" height="4.8" stroke="none"/><rect x="817.6" y="299.5" width="10" height="18" fill="none" stroke-width="1.2"/><rect x="818.9" y="302.5" width="7.4" height="6.1" stroke="none"/><rect x="818.9" y="308.5" width="7.4" height="6.1" stroke="none"/><rect x="817.6" y="319.5" width="10" height="24" fill="none" stroke-width="1.2"/><rect x="818.9" y="321.9" width="7.4" height="7.3" stroke="none"/><rect x="818.9" y="333.9" width="7.4" height="7.3" stroke="none"/><rect x="817.6" y="347.1" width="10" height="17.5" fill="none" stroke-width="1.2"/><rect x="818.9" y="349.8" width="7.4" height="6.1" stroke="none"/><rect x="818.9" y="355.8" width="7.4" height="6.1" stroke="none"/><rect x="817.6" y="374.8" width="10" height="22.5" fill="none" stroke-width="1.2"/><rect x="818.9" y="377.6" width="7.4" height="7.1" stroke="none"/><rect x="818.9" y="387.4" width="7.4" height="7.1" stroke="none"/><rect x="817.3" y="396.7" width="9.4" height="3.8" stroke="none"/><rect x="630.5" y="360.3" width="3" height="9" stroke="none"/><rect x="630.5" y="413.8" width="3" height="9.5" stroke="none"/><rect x="620.3" y="370.4" width="8.5" height="3" stroke="none"/><rect x="674.2" y="370.4" width="9.3" height="3" stroke="none"/><rect x="634.4" y="360.3" width="3" height="9" stroke="none"/><rect x="634.4" y="413.8" width="3" height="9.5" stroke="none"/><rect x="620.3" y="374.3" width="8.5" height="3" stroke="none"/><rect x="674.2" y="374.3" width="9.3" height="3" stroke="none"/><rect x="638.3" y="360.3" width="3" height="9" stroke="none"/><rect x="638.3" y="413.8" width="3" height="9.5" stroke="none"/><rect x="620.3" y="378.2" width="8.5" height="3" stroke="none"/><rect x="674.2" y="378.2" width="9.3" height="3" stroke="none"/><rect x="642.2" y="360.3" width="3" height="9" stroke="none"/><rect x="642.2" y="413.8" width="3" height="9.5" stroke="none"/><rect x="620.3" y="382.1" width="8.5" height="3" stroke="none"/><rect x="674.2" y="382.1" width="9.3" height="3" stroke="none"/><rect x="646" y="360.3" width="3" height="9" stroke="none"/><rect x="646" y="413.8" width="3" height="9.5" stroke="none"/><rect x="620.3" y="385.9" width="8.5" height="3" stroke="none"/><rect x="674.2" y="385.9" width="9.3" height="3" stroke="none"/><rect x="649.9" y="360.3" width="3" height="9" stroke="none"/><rect x="649.9" y="413.8" width="3" height="9.5" stroke="none"/><rect x="620.3" y="389.8" width="8.5" height="3" stroke="none"/><rect x="674.2" y="389.8" width="9.3" height="3" stroke="none"/><rect x="653.8" y="360.3" width="3" height="9" stroke="none"/><rect x="653.8" y="413.8" width="3" height="9.5" stroke="none"/><rect x="620.3" y="393.7" width="8.5" height="3" stroke="none"/><rect x="674.2" y="393.7" width="9.3" height="3" stroke="none"/><rect x="657.6" y="360.3" width="3" height="9" stroke="none"/><rect x="657.6" y="413.8" width="3" height="9.5" stroke="none"/><rect x="620.3" y="397.5" width="8.5" height="3" stroke="none"/><rect x="674.2" y="397.5" width="9.3" height="3" stroke="none"/><rect x="661.5" y="360.3" width="3" height="9" stroke="none"/><rect x="661.5" y="413.8" width="3" height="9.5" stroke="none"/><rect x="620.3" y="401.4" width="8.5" height="3" stroke="none"/><rect x="674.2" y="401.4" width="9.3" height="3" stroke="none"/><rect x="665.4" y="360.3" width="3" height="9" stroke="none"/><rect x="665.4" y="413.8" width="3" height="9.5" stroke="none"/><rect x="620.3" y="405.3" width="8.5" height="3" stroke="none"/><rect x="674.2" y="405.3" width="9.3" height="3" stroke="none"/><rect x="669.2" y="360.3" width="3" height="9" stroke="none"/><rect x="669.2" y="413.8" width="3" height="9.5" stroke="none"/><rect x="620.3" y="409.2" width="8.5" height="3" stroke="none"/><rect x="674.2" y="409.2" width="9.3" height="3" stroke="none"/><path d="M631 371H672.700V411.500H630.500V371.500Z" fill="none" stroke-width="1.200" stroke-dasharray="4 2.500"/></g>
<g opacity="0.706" stroke="#32c832" fill="#32c832"><path d="M573 247.4a4.5 4.5 0 1 0 9 0a4.5 4.5 0 1 0 -9 0zM576 245.9h3v3h-3z" fill-rule="evenodd" stroke="none"/><path d="M573 259.6a4.5 4.5 0 1 0 9 0a4.5 4.5 0 1 0 -9 0zM576 258.1h3v3h-3z" fill-rule="evenodd" stroke="none"/><path d="M585.2 247.4a4.5 4.5 0 1 0 9 0a4.5 4.5 0 1 0 -9 0zM588.2 245.9h3v3h-3z" fill-rule="evenodd" stroke="none"/><path d="M585.2 259.6a4.5 4.5 0 1 0 9 0a4.5 4.5 0 1 0 -9 0zM588.2 258.1h3v3h-3z" fill-rule="evenodd" stroke="none"/><path d="M597.4 247.4a4.5 4.5 0 1 0 9 0a4.5 4.5 0 1 0 -9 0zM600.4 245.9h3v3h-3z" fill-rule="evenodd" stroke="none"/><path d="M597.4 259.6a4.5 4.5 0 1 0 9 0a4.5 4.5 0 1 0 -9 0zM600.4 258.1h3v3h-3z" fill-rule="evenodd" stroke="none"/><path d="M609.6 247.4a4.5 4.5 0 1 0 9 0a4.5 4.5 0 1 0 -9 0zM612.6 245.9h3v3h-3z" fill-rule="evenodd" stroke="none"/><path d="M609.6 259.6a4.5 4.5 0 1 0 9 0a4.5 4.5 0 1 0 -9 0zM612.6 258.1h3v3h-3z" fill-rule="evenodd" stroke="none"/><path d="M621.8 247.4a4.5 4.5 0 1 0 9 0a4.5 4.5 0 1 0 -9 0zM624.8 245.9h3v3h-3z" fill-rule="evenodd" stroke="none"/><path d="M621.8 259.6a4.5 4.5 0 1 0 9 0a4.5 4.5 0 1 0 -9 0zM624.8 258.1h3v3h-3z" fill-rule="evenodd" stroke="none"/><path d="M634 247.4a4.5 4.5 0 1 0 9 0a4.5 4.5 0 1 0 -9 0zM637 245.9h3v3h-3z" fill-rule="evenodd" stroke="none"/><path d="M634 259.6a4.5 4.5 0 1 0 9 0a4.5 4.5 0 1 0 -9 0zM637 258.1h3v3h-3z" fill-rule="evenodd" stroke="none"/><path d="M530 290.5a4.5 4.5 0 1 0 9 0a4.5 4.5 0 1 0 -9 0zM533 289h3v3h-3z" fill-rule="evenodd" stroke="none"/><path d="M542.1 290.5a4.5 4.5 0 1 0 9 0a4.5 4.5 0 1 0 -9 0zM545.1 289h3v3h-3z" fill-rule="evenodd" stroke="none"/><path d="M555 290.5a4.5 4.5 0 1 0 9 0a4.5 4.5 0 1 0 -9 0zM558 289h3v3h-3z" fill-rule="evenodd" stroke="none"/><path d="M542.1 302.3a4.5 4.5 0 1 0 9 0a4.5 4.5 0 1 0 -9 0zM545.1 300.8h3v3h-3z" fill-rule="evenodd" stroke="none"/><path d="M542.1 317.3a4.5 4.5 0 1 0 9 0a4.5 4.5 0 1 0 -9 0zM545.1 315.8h3v3h-3z" fill-rule="evenodd" stroke="none"/><path d="M530 329.3a4.5 4.5 0 1 0 9 0a4.5 4.5 0 1 0 -9 0zM533 327.8h3v3h-3z" fill-rule="evenodd" stroke="none"/><path d="M542.1 329.3a4.5 4.5 0 1 0 9 0a4.5 4.5 0 1 0 -9 0zM545.1 327.8h3v3h-3z" fill-rule="evenodd" stroke="none"/><path d="M555.1 329.3a4.5 4.5 0 1 0 9 0a4.5 4.5 0 1 0 -9 0zM558.1 327.8h3v3h-3z" fill-rule="evenodd" stroke="none"/><path d="M530 345.6a4.5 4.5 0 1 0 9 0a4.5 4.5 0 1 0 -9 0zM533 344.1h3v3h-3z" fill-rule="evenodd" stroke="none"/><path d="M542.1 345.6a4.5 4.5 0 1 0 9 0a4.5 4.5 0 1 0 -9 0zM545.1 344.1h3v3h-3z" fill-rule="evenodd" stroke="none"/><path d="M530 363.2a4.5 4.5 0 1 0 9 0a4.5 4.5 0 1 0 -9 0zM533 361.7h3v3h-3z" fill-rule="evenodd" stroke="none"/><path d="M542.1 363.2a4.5 4.5 0 1 0 9 0a4.5 4.5 0 1 0 -9 0zM545.1 361.7h3v3h-3z" fill-rule="evenodd" stroke="none"/><path d="M757.8 252.4a4.5 4.5 0 1 0 9 0a4.5 4.5 0 1 0 -9 0zM760.8 250.9h3v3h-3z" fill-rule="evenodd" stroke="none"/><path d="M757.8 264.7a4.5 4.5 0 1 0 9 0a4.5 4.5 0 1 0 -9 0zM760.8 263.2h3v3h-3z" fill-rule="evenodd" stroke="none"/><path d="M757.8 277a4.5 4.5 0 1 0 9 0a4.5 4.5 0 1 0 -9 0zM760.8 275.5h3v3h-3z" fill-rule="evenodd" stroke="none"/><path d="M757.8 289.3a4.5 4.5 0 1 0 9 0a4.5 4.5 0 1 0 -9 0zM760.8 287.8h3v3h-3z" fill-rule="evenodd" stroke="none"/><path d="M757.8 301.6a4.5 4.5 0 1 0 9 0a4.5 4.5 0 1 0 -9 0zM760.8 300.1h3v3h-3z" fill-rule="evenodd" stroke="none"/><path d="M757.8 313.9a4.5 4.5 0 1 0 9 0a4.5 4.5 0 1 0 -9 0zM760.8 312.4h3v3h-3z" fill-rule="evenodd" stroke="none"/><path d="M757.8 326.2a4.5 4.5 0 1 0 9 0a4.5 4.5 0 1 0 -9 0zM760.8 324.7h3v3h-3z" fill-rule="evenodd" stroke="none"/><path d="M757.8 338.5a4.5 4.5 0 1 0 9 0a4.5 4.5 0 1 0 -9 0zM760.8 337h3v3h-3z" fill-rule="evenodd" stroke="none"/><path d="M757.8 353.5a4.5 4.5 0 1 0 9 0a4.5 4.5 0 1 0 -9 0zM760.8 352h3v3h-3z" fill-rule="evenodd" stroke="none"/><path d="M757.8 365.8a4.5 4.5 0 1 0 9 0a4.5 4.5 0 1 0 -9 0zM760.8 364.3h3v3h-3z" fill-rule="evenodd" stroke="none"/><path d="M757.8 378.1a4.5 4.5 0 1 0 9 0a4.5 4.5 0 1 0 -9 0zM760.8 376.6h3v3h-3z" fill-rule="evenodd" stroke="none"/><path d="M757.8 390.4a4.5 4.5 0 1 0 9 0a4.5 4.5 0 1 0 -9 0zM760.8 388.9h3v3h-3z" fill-rule="evenodd" stroke="none"/><path d="M757.8 404.9a4.5 4.5 0 1 0 9 0a4.5 4.5 0 1 0 -9 0zM760.8 403.4h3v3h-3z" fill-rule="evenodd" stroke="none"/><path d="M757.8 417.2a4.5 4.5 0 1 0 9 0a4.5 4.5 0 1 0 -9 0zM760.8 415.7h3v3h-3z" fill-rule="evenodd" stroke="none"/><path d="M757.8 432.2a4.5 4.5 0 1 0 9 0a4.5 4.5 0 1 0 -9 0zM760.8 430.7h3v3h-3z" fill-rule="evenodd" stroke="none"/><path d="M757.8 444.5a4.5 4.5 0 1 0 9 0a4.5 4.5 0 1 0 -9 0zM760.8 443h3v3h-3z" fill-rule="evenodd" stroke="none"/><path d="M757.8 462.2a4.5 4.5 0 1 0 9 0a4.5 4.5 0 1 0 -9 0zM760.8 460.7h3v3h-3z" fill-rule="evenodd" stroke="none"/><path d="M757.8 474.6a4.5 4.5 0 1 0 9 0a4.5 4.5 0 1 0 -9 0zM760.8 473.1h3v3h-3z" fill-rule="evenodd" stroke="none"/><path d="M757.8 487a4.5 4.5 0 1 0 9 0a4.5 4.5 0 1 0 -9 0zM760.8 485.5h3v3h-3z" fill-rule="evenodd" stroke="none"/><path d="M757.8 499.3a4.5 4.5 0 1 0 9 0a4.5 4.5 0 1 0 -9 0zM760.8 497.8h3v3h-3z" fill-rule="evenodd" stroke="none"/><path d="M757.8 523.2a4.5 4.5 0 1 0 9 0a4.5 4.5 0 1 0 -9 0zM760.8 521.7h3v3h-3z" fill-rule="evenodd" stroke="none"/><path d="M757.8 536a4.5 4.5 0 1 0 9 0a4.5 4.5 0 1 0 -9 0zM760.8 534.5h3v3h-3z" fill-rule="evenodd" stroke="none"/><path d="M770 252.4a4.5 4.5 0 1 0 9 0a4.5 4.5 0 1 0 -9 0zM773 250.9h3v3h-3z" fill-rule="evenodd" stroke="none"/><path d="M770 264.7a4.5 4.5 0 1 0 9 0a4.5 4.5 0 1 0 -9 0zM773 263.2h3v3h-3z" fill-rule="evenodd" stroke="none"/><path d="M770 277a4.5 4.5 0 1 0 9 0a4.5 4.5 0 1 0 -9 0zM773 275.5h3v3h-3z" fill-rule="evenodd" stroke="none"/><path d="M770 289.3a4.5 4.5 0 1 0 9 0a4.5 4.5 0 1 0 -9 0zM773 287.8h3v3h-3z" fill-rule="evenodd" stroke="none"/><path d="M770 301.6a4.5 4.5 0 1 0 9 0a4.5 4.5 0 1 0 -9 0zM773 300.1h3v3h-3z" fill-rule="evenodd" stroke="none"/><path d="M770 313.9a4.5 4.5 0 1 0 9 0a4.5 4.5 0 1 0 -9 0zM773 312.4h3v3h-3z" fill-rule="evenodd" stroke="none"/><path d="M770 326.2a4.5 4.5 0 1 0 9 0a4.5 4.5 0 1 0 -9 0zM773 324.7h3v3h-3z" fill-rule="evenodd" stroke="none"/><path d="M770 338.5a4.5 4.5 0 1 0 9 0a4.5 4.5 0 1 0 -9 0zM773 337h3v3h-3z" fill-rule="evenodd" stroke="none"/><path d="M770 353.5a4.5 4.5 0 1 0 9 0a4.5 4.5 0 1 0 -9 0zM773 352h3v3h-3z" fill-rule="evenodd" stroke="none"/><path d="M770 365.8a4.5 4.5 0 1 0 9 0a4.5 4.5 0 1 0 -9 0zM773 364.3h3v3h-3z" fill-rule="evenodd" stroke="none"/><path d="M770 378.1a4.5 4.5 0 1 0 9 0a4.5 4.5 0 1 0 -9 0zM773 376.6h3v3h-3z" fill-rule="evenodd" stroke="none"/><path d="M770 390.4a4.5 4.5 0 1 0 9 0a4.5 4.5 0 1 0 -9 0zM773 388.9h3v3h-3z" fill-rule="evenodd" stroke="none"/><path d="M770 404.9a4.5 4.5 0 1 0 9 0a4.5 4.5 0 1 0 -9 0zM773 403.4h3v3h-3z" fill-rule="evenodd" stroke="none"/><path d="M770 417.2a4.5 4.5 0 1 0 9 0a4.5 4.5 0 1 0 -9 0zM773 415.7h3v3h-3z" fill-rule="evenodd" stroke="none"/><path d="M770 432.2a4.5 4.5 0 1 0 9 0a4.5 4.5 0 1 0 -9 0zM773 430.7h3v3h-3z" fill-rule="evenodd" stroke="none"/><path d="M770 444.5a4.5 4.5 0 1 0 9 0a4.5 4.5 0 1 0 -9 0zM773 443h3v3h-3z" fill-rule="evenodd" stroke="none"/><path d="M770 462.2a4.5 4.5 0 1 0 9 0a4.5 4.5 0 1 0 -9 0zM773 460.7h3v3h-3z" fill-rule="evenodd" stroke="none"/><path d="M770 474.6a4.5 4.5 0 1 0 9 0a4.5 4.5 0 1 0 -9 0zM773 473.1h3v3h-3z" fill-rule="evenodd" stroke="none"/><path d="M770 487a4.5 4.5 0 1 0 9 0a4.5 4.5 0 1 0 -9 0zM773 485.5h3v3h-3z" fill-rule="evenodd" stroke="none"/><path d="M770 499.3a4.5 4.5 0 1 0 9 0a4.5 4.5 0 1 0 -9 0zM773 497.8h3v3h-3z" fill-rule="evenodd" stroke="none"/><path d="M770 523.2a4.5 4.5 0 1 0 9 0a4.5 4.5 0 1 0 -9 0zM773 521.7h3v3h-3z" fill-rule="evenodd" stroke="none"/><path d="M770 536a4.5 4.5 0 1 0 9 0a4.5 4.5 0 1 0 -9 0zM773 534.5h3v3h-3z" fill-rule="evenodd" stroke="none"/><path d="M782.2 252.4a4.5 4.5 0 1 0 9 0a4.5 4.5 0 1 0 -9 0zM785.2 250.9h3v3h-3z" fill-rule="evenodd" stroke="none"/><path d="M782.2 264.7a4.5 4.5 0 1 0 9 0a4.5 4.5 0 1 0 -9 0zM785.2 263.2h3v3h-3z" fill-rule="evenodd" stroke="none"/><path d="M782.2 277a4.5 4.5 0 1 0 9 0a4.5 4.5 0 1 0 -9 0zM785.2 275.5h3v3h-3z" fill-rule="evenodd" stroke="none"/><path d="M782.2 289.3a4.5 4.5 0 1 0 9 0a4.5 4.5 0 1 0 -9 0zM785.2 287.8h3v3h-3z" fill-rule="evenodd" stroke="none"/><path d="M782.2 301.6a4.5 4.5 0 1 0 9 0a4.5 4.5 0 1 0 -9 0zM785.2 300.1h3v3h-3z" fill-rule="evenodd" stroke="none"/><path d="M782.2 313.9a4.5 4.5 0 1 0 9 0a4.5 4.5 0 1 0 -9 0zM785.2 312.4h3v3h-3z" fill-rule="evenodd" stroke="none"/><path d="M782.2 326.2a4.5 4.5 0 1 0 9 0a4.5 4.5 0 1 0 -9 0zM785.2 324.7h3v3h-3z" fill-rule="evenodd" stroke="none"/><path d="M782.2 338.5a4.5 4.5 0 1 0 9 0a4.5 4.5 0 1 0 -9 0zM785.2 337h3v3h-3z" fill-rule="evenodd" stroke="none"/><path d="M782.2 353.5a4.5 4.5 0 1 0 9 0a4.5 4.5 0 1 0 -9 0zM785.2 352h3v3h-3z" fill-rule="evenodd" stroke="none"/><path d="M782.2 365.8a4.5 4.5 0 1 0 9 0a4.5 4.5 0 1 0 -9 0zM785.2 364.3h3v3h-3z" fill-rule="evenodd" stroke="none"/><path d="M782.2 378.1a4.5 4.5 0 1 0 9 0a4.5 4.5 0 1 0 -9 0zM785.2 376.6h3v3h-3z" fill-rule="evenodd" stroke="none"/><path d="M782.2 390.4a4.5 4.5 0 1 0 9 0a4.5 4.5 0 1 0 -9 0zM785.2 388.9h3v3h-3z" fill-rule="evenodd" stroke="none"/><path d="M782.2 404.9a4.5 4.5 0 1 0 9 0a4.5 4.5 0 1 0 -9 0zM785.2 403.4h3v3h-3z" fill-rule="evenodd" stroke="none"/><path d="M782.2 417.2a4.5 4.5 0 1 0 9 0a4.5 4.5 0 1 0 -9 0zM785.2 415.7h3v3h-3z" fill-rule="evenodd" stroke="none"/><path d="M782.2 432.2a4.5 4.5 0 1 0 9 0a4.5 4.5 0 1 0 -9 0zM785.2 430.7h3v3h-3z" fill-rule="evenodd" stroke="none"/><path d="M782.2 444.5a4.5 4.5 0 1 0 9 0a4.5 4.5 0 1 0 -9 0zM785.2 443h3v3h-3z" fill-rule="evenodd" stroke="none"/><path d="M782.2 462.2a4.5 4.5 0 1 0 9 0a4.5 4.5 0 1 0 -9 0zM785.2 460.7h3v3h-3z" fill-rule="evenodd" stroke="none"/><path d="M782.2 474.6a4.5 4.5 0 1 0 9 0a4.5 4.5 0 1 0 -9 0zM785.2 473.1h3v3h-3z" fill-rule="evenodd" stroke="none"/><path d="M782.2 487a4.5 4.5 0 1 0 9 0a4.5 4.5 0 1 0 -9 0zM785.2 485.5h3v3h-3z" fill-rule="evenodd" stroke="none"/><path d="M782.2 499.3a4.5 4.5 0 1 0 9 0a4.5 4.5 0 1 0 -9 0zM785.2 497.8h3v3h-3z" fill-rule="evenodd" stroke="none"/><path d="M782.2 523.2a4.5 4.5 0 1 0 9 0a4.5 4.5 0 1 0 -9 0zM785.2 521.7h3v3h-3z" fill-rule="evenodd" stroke="none"/><path d="M782.2 536a4.5 4.5 0 1 0 9 0a4.5 4.5 0 1 0 -9 0zM785.2 534.5h3v3h-3z" fill-rule="evenodd" stroke="none"/><path d="M794.7 252.4a4.5 4.5 0 1 0 9 0a4.5 4.5 0 1 0 -9 0zM797.7 250.9h3v3h-3z" fill-rule="evenodd" stroke="none"/><path d="M794.7 264.7a4.5 4.5 0 1 0 9 0a4.5 4.5 0 1 0 -9 0zM797.7 263.2h3v3h-3z" fill-rule="evenodd" stroke="none"/><path d="M794.7 277a4.5 4.5 0 1 0 9 0a4.5 4.5 0 1 0 -9 0zM797.7 275.5h3v3h-3z" fill-rule="evenodd" stroke="none"/><path d="M794.7 289.3a4.5 4.5 0 1 0 9 0a4.5 4.5 0 1 0 -9 0zM797.7 287.8h3v3h-3z" fill-rule="evenodd" stroke="none"/><path d="M794.7 301.6a4.5 4.5 0 1 0 9 0a4.5 4.5 0 1 0 -9 0zM797.7 300.1h3v3h-3z" fill-rule="evenodd" stroke="none"/><path d="M794.7 313.9a4.5 4.5 0 1 0 9 0a4.5 4.5 0 1 0 -9 0zM797.7 312.4h3v3h-3z" fill-rule="evenodd" stroke="none"/><path d="M794.7 326.2a4.5 4.5 0 1 0 9 0a4.5 4.5 0 1 0 -9 0zM797.7 324.7h3v3h-3z" fill-rule="evenodd" stroke="none"/><path d="M794.7 338.5a4.5 4.5 0 1 0 9 0a4.5 4.5 0 1 0 -9 0zM797.7 337h3v3h-3z" fill-rule="evenodd" stroke="none"/><path d="M794.7 353.5a4.5 4.5 0 1 0 9 0a4.5 4.5 0 1 0 -9 0zM797.7 352h3v3h-3z" fill-rule="evenodd" stroke="none"/><path d="M794.7 365.8a4.5 4.5 0 1 0 9 0a4.5 4.5 0 1 0 -9 0zM797.7 364.3h3v3h-3z" fill-rule="evenodd" stroke="none"/><path d="M794.7 378.1a4.5 4.5 0 1 0 9 0a4.5 4.5 0 1 0 -9 0zM797.7 376.6h3v3h-3z" fill-rule="evenodd" stroke="none"/><path d="M794.7 390.4a4.5 4.5 0 1 0 9 0a4.5 4.5 0 1 0 -9 0zM797.7 388.9h3v3h-3z" fill-rule="evenodd" stroke="none"/><path d="M794.7 404.9a4.5 4.5 0 1 0 9 0a4.5 4.5 0 1 0 -9 0zM797.7 403.4h3v3h-3z" fill-rule="evenodd" stroke="none"/><path d="M794.7 417.2a4.5 4.5 0 1 0 9 0a4.5 4.5 0 1 0 -9 0zM797.7 415.7h3v3h-3z" fill-rule="evenodd" stroke="none"/><path d="M794.7 432.2a4.5 4.5 0 1 0 9 0a4.5 4.5 0 1 0 -9 0zM797.7 430.7h3v3h-3z" fill-rule="evenodd" stroke="none"/><path d="M794.7 444.5a4.5 4.5 0 1 0 9 0a4.5 4.5 0 1 0 -9 0zM797.7 443h3v3h-3z" fill-rule="evenodd" stroke="none"/><path d="M794.7 462.2a4.5 4.5 0 1 0 9 0a4.5 4.5 0 1 0 -9 0zM797.7 460.7h3v3h-3z" fill-rule="evenodd" stroke="none"/><path d="M794.7 474.6a4.5 4.5 0 1 0 9 0a4.5 4.5 0 1 0 -9 0zM797.7 473.1h3v3h-3z" fill-rule="evenodd" stroke="none"/><path d="M794.7 487a4.5 4.5 0 1 0 9 0a4.5 4.5 0 1 0 -9 0zM797.7 485.5h3v3h-3z" fill-rule="evenodd" stroke="none"/><path d="M794.7 499.3a4.5 4.5 0 1 0 9 0a4.5 4.5 0 1 0 -9 0zM797.7 497.8h3v3h-3z" fill-rule="evenodd" stroke="none"/><path d="M794.7 523.2a4.5 4.5 0 1 0 9 0a4.5 4.5 0 1 0 -9 0zM797.7 521.7h3v3h-3z" fill-rule="evenodd" stroke="none"/><path d="M794.7 536a4.5 4.5 0 1 0 9 0a4.5 4.5 0 1 0 -9 0zM797.7 534.5h3v3h-3z" fill-rule="evenodd" stroke="none"/><path d="M570.3 445.3a4.5 4.5 0 1 0 9 0a4.5 4.5 0 1 0 -9 0zM573.3 443.8h3v3h-3z" fill-rule="evenodd" stroke="none"/><path d="M582.5 445.3a4.5 4.5 0 1 0 9 0a4.5 4.5 0 1 0 -9 0zM585.5 443.8h3v3h-3z" fill-rule="evenodd" stroke="none"/><path d="M570.3 457.5a4.5 4.5 0 1 0 9 0a4.5 4.5 0 1 0 -9 0zM573.3 456h3v3h-3z" fill-rule="evenodd" stroke="none"/><path d="M582.5 457.5a4.5 4.5 0 1 0 9 0a4.5 4.5 0 1 0 -9 0zM585.5 456h3v3h-3z" fill-rule="evenodd" stroke="none"/><path d="M604.1 444.5a4.5 4.5 0 1 0 9 0a4.5 4.5 0 1 0 -9 0zM607.1 443h3v3h-3z" fill-rule="evenodd" stroke="none"/><path d="M604.1 457a4.5 4.5 0 1 0 9 0a4.5 4.5 0 1 0 -9 0zM607.1 455.5h3v3h-3z" fill-rule="evenodd" stroke="none"/><path d="M683 444.3a4.5 4.5 0 1 0 9 0a4.5 4.5 0 1 0 -9 0zM686 442.8h3v3h-3z" fill-rule="evenodd" stroke="none"/><path d="M694.8 444.3a4.5 4.5 0 1 0 9 0a4.5 4.5 0 1 0 -9 0zM697.8 442.8h3v3h-3z" fill-rule="evenodd" stroke="none"/><path d="M683 460.3a4.5 4.5 0 1 0 9 0a4.5 4.5 0 1 0 -9 0zM686 458.8h3v3h-3z" fill-rule="evenodd" stroke="none"/><path d="M694.8 460.3a4.5 4.5 0 1 0 9 0a4.5 4.5 0 1 0 -9 0zM697.8 458.8h3v3h-3z" fill-rule="evenodd" stroke="none"/><path d="M710.7 493.4a4.5 4.5 0 1 0 9 0a4.5 4.5 0 1 0 -9 0zM713.7 491.9h3v3h-3z" fill-rule="evenodd" stroke="none"/><path d="M722.8 493.4a4.5 4.5 0 1 0 9 0a4.5 4.5 0 1 0 -9 0zM725.8 491.9h3v3h-3z" fill-rule="evenodd" stroke="none"/><path d="M736.5 493.4a4.5 4.5 0 1 0 9 0a4.5 4.5 0 1 0 -9 0zM739.5 491.9h3v3h-3z" fill-rule="evenodd" stroke="none"/><path d="M722.5 507.4a4.5 4.5 0 1 0 9 0a4.5 4.5 0 1 0 -9 0zM725.5 505.9h3v3h-3z" fill-rule="evenodd" stroke="none"/><path d="M735.9 507.4a4.5 4.5 0 1 0 9 0a4.5 4.5 0 1 0 -9 0zM738.9 505.9h3v3h-3z" fill-rule="evenodd" stroke="none"/><path d="M542 404.5a4.3 4.3 0 1 0 8.6 0a4.3 4.3 0 1 0 -8.6 0zM544.7 402.9h3.2v3.2h-3.2z" fill-rule="evenodd" stroke="none"/><path d="M542 421.8a4.3 4.3 0 1 0 8.6 0a4.3 4.3 0 1 0 -8.6 0zM544.7 420.2h3.2v3.2h-3.2z" fill-rule="evenodd" stroke="none"/><path d="M582.9 398.2a3.4 3.4 0 1 0 6.8 0a3.4 3.4 0 1 0 -6.8 0zM585 396.9h2.6v2.6h-2.6z" fill-rule="evenodd" stroke="none"/><path d="M582.9 421.2a3.4 3.4 0 1 0 6.8 0a3.4 3.4 0 1 0 -6.8 0zM585 419.9h2.6v2.6h-2.6z" fill-rule="evenodd" stroke="none"/><path d="M662 293.5a3.3 3.3 0 1 0 6.6 0a3.3 3.3 0 1 0 -6.6 0zM663.9 292.1h2.8v2.8h-2.8z" fill-rule="evenodd" stroke="none"/><path d="M674.3 293.5a3.3 3.3 0 1 0 6.6 0a3.3 3.3 0 1 0 -6.6 0zM676.2 292.1h2.8v2.8h-2.8z" fill-rule="evenodd" stroke="none"/><path d="M697 293.5a3.3 3.3 0 1 0 6.6 0a3.3 3.3 0 1 0 -6.6 0zM698.9 292.1h2.8v2.8h-2.8z" fill-rule="evenodd" stroke="none"/><path d="M709.3 293.5a3.3 3.3 0 1 0 6.6 0a3.3 3.3 0 1 0 -6.6 0zM711.2 292.1h2.8v2.8h-2.8z" fill-rule="evenodd" stroke="none"/><path d="M528.1 477.3a4.3 4.3 0 1 0 8.6 0a4.3 4.3 0 1 0 -8.6 0zM531.1 476h2.6v2.6h-2.6z" fill-rule="evenodd" stroke="none"/><path d="M528.1 499.3a4.3 4.3 0 1 0 8.6 0a4.3 4.3 0 1 0 -8.6 0zM531.1 498h2.6v2.6h-2.6z" fill-rule="evenodd" stroke="none"/><path d="M542.4 466.3 L546.8 466.3 L549.8 469.3 L549.8 473.7 L546.8 476.7 L542.4 476.7 L539.4 473.7 L539.4 469.3Z" fill="none" stroke-width="1.3"/><path d="M542.4 499.8 L546.8 499.8 L549.8 502.8 L549.8 507.2 L546.8 510.2 L542.4 510.2 L539.4 507.2 L539.4 502.8Z" fill="none" stroke-width="1.3"/><circle cx="580.4" cy="492.6" r="4.6" stroke="none"/><circle cx="580.4" cy="505.4" r="4.6" stroke="none"/><rect x="577.6" y="492.6" width="5.6" height="12.8" stroke="none"/><circle cx="592.6" cy="492.6" r="4.6" stroke="none"/><circle cx="592.6" cy="505.4" r="4.6" stroke="none"/><rect x="589.8" y="492.6" width="5.6" height="12.8" stroke="none"/><circle cx="604.8" cy="492.6" r="4.6" stroke="none"/><circle cx="604.8" cy="505.4" r="4.6" stroke="none"/><rect x="602" y="492.6" width="5.6" height="12.8" stroke="none"/><circle cx="617" cy="492.6" r="4.6" stroke="none"/><circle cx="617" cy="505.4" r="4.6" stroke="none"/><rect x="614.2" y="492.6" width="5.6" height="12.8" stroke="none"/><circle cx="629.2" cy="492.6" r="4.6" stroke="none"/><circle cx="629.2" cy="505.4" r="4.6" stroke="none"/><rect x="626.4" y="492.6" width="5.6" height="12.8" stroke="none"/><circle cx="641.4" cy="492.6" r="4.6" stroke="none"/><circle cx="641.4" cy="505.4" r="4.6" stroke="none"/><rect x="638.6" y="492.6" width="5.6" height="12.8" stroke="none"/><circle cx="653.6" cy="492.6" r="4.6" stroke="none"/><circle cx="653.6" cy="505.4" r="4.6" stroke="none"/><rect x="650.8" y="492.6" width="5.6" height="12.8" stroke="none"/><circle cx="627.4" cy="342.3" r="3.3" stroke="none"/><circle cx="633.5" cy="342.3" r="3.3" stroke="none"/><circle cx="640.3" cy="342.3" r="3.3" stroke="none"/><circle cx="647" cy="342.3" r="3.3" stroke="none"/><circle cx="617.6" cy="352.4" r="3.3" stroke="none"/><circle cx="595.3" cy="354" r="3.3" stroke="none"/><circle cx="623.2" cy="359" r="3.3" stroke="none"/><circle cx="623.2" cy="366.4" r="3.3" stroke="none"/><circle cx="611.5" cy="372" r="3.3" stroke="none"/><circle cx="614.2" cy="383" r="3.3" stroke="none"/><circle cx="638.4" cy="372.6" r="3.3" stroke="none"/><circle cx="634.2" cy="385.2" r="3.3" stroke="none"/><circle cx="635.3" cy="394" r="3.3" stroke="none"/><circle cx="676.7" cy="339" r="3.3" stroke="none"/><circle cx="680" cy="341.8" r="3.3" stroke="none"/><circle cx="687.3" cy="341.8" r="3.3" stroke="none"/><circle cx="669.2" cy="395.5" r="3.3" stroke="none"/><circle cx="578.6" cy="403" r="3.3" stroke="none"/><circle cx="606.3" cy="412.4" r="3.3" stroke="none"/><circle cx="615" cy="416.2" r="3.3" stroke="none"/><circle cx="621.4" cy="419.3" r="3.3" stroke="none"/><circle cx="605" cy="429.4" r="3.3" stroke="none"/><circle cx="600.7" cy="434.4" r="3.3" stroke="none"/><circle cx="594.4" cy="437.5" r="3.3" stroke="none"/><circle cx="633.4" cy="433" r="3.3" stroke="none"/><circle cx="644.7" cy="441.3" r="3.3" stroke="none"/><circle cx="640.3" cy="446.3" r="3.3" stroke="none"/><circle cx="634.6" cy="451.4" r="3.3" stroke="none"/><circle cx="627" cy="450" r="3.3" stroke="none"/><circle cx="625.2" cy="462.7" r="3.3" stroke="none"/><circle cx="637" cy="462.7" r="3.3" stroke="none"/><circle cx="615.8" cy="464.6" r="3.3" stroke="none"/><circle cx="643.4" cy="470.2" r="3.3" stroke="none"/><circle cx="651.6" cy="409.3" r="3.3" stroke="none"/><circle cx="677.2" cy="431.3" r="3.3" stroke="none"/><circle cx="666.7" cy="456.4" r="3.3" stroke="none"/><circle cx="666.7" cy="465.2" r="3.3" stroke="none"/><circle cx="691.8" cy="401" r="3.3" stroke="none"/><circle cx="698.5" cy="406" r="3.3" stroke="none"/><circle cx="704.6" cy="408.4" r="3.3" stroke="none"/><circle cx="728" cy="401" r="3.3" stroke="none"/><circle cx="724.2" cy="407.8" r="3.3" stroke="none"/><circle cx="724.2" cy="418.4" r="3.3" stroke="none"/><circle cx="725.3" cy="429" r="3.3" stroke="none"/><circle cx="714" cy="457" r="3.3" stroke="none"/><circle cx="716.3" cy="465.4" r="3.3" stroke="none"/><circle cx="740.4" cy="470.4" r="3.3" stroke="none"/><circle cx="727" cy="473.2" r="3.3" stroke="none"/><circle cx="698.9" cy="469" r="3.3" stroke="none"/><circle cx="701.3" cy="477" r="3.3" stroke="none"/><circle cx="651.5" cy="477.6" r="3.3" stroke="none"/><circle cx="656.4" cy="482.5" r="3.3" stroke="none"/><circle cx="721.4" cy="362.5" r="3.3" stroke="none"/><circle cx="728" cy="364" r="3.3" stroke="none"/><circle cx="698.5" cy="368.6" r="3.3" stroke="none"/><circle cx="726.4" cy="375.3" r="3.3" stroke="none"/><circle cx="726.4" cy="388" r="3.3" stroke="none"/><circle cx="690" cy="395" r="3.3" stroke="none"/><circle cx="768.6" cy="454.5" r="3.3" stroke="none"/><circle cx="812.5" cy="398.6" r="3.3" stroke="none"/><circle cx="754" cy="347.2" r="3.3" stroke="none"/><circle cx="813.5" cy="345.6" r="3.3" stroke="none"/><circle cx="643.6" cy="479" r="3.3" stroke="none"/><circle cx="650.3" cy="477.2" r="3.3" stroke="none"/><circle cx="656.5" cy="482.3" r="3.3" stroke="none"/><circle cx="593.8" cy="514.4" r="3.3" stroke="none"/><circle cx="672" cy="516.3" r="3.3" stroke="none"/><circle cx="673.8" cy="526.4" r="3.3" stroke="none"/><circle cx="653.7" cy="531.4" r="3.3" stroke="none"/><circle cx="673" cy="535.3" r="3.3" stroke="none"/><circle cx="669.3" cy="545.4" r="3.3" stroke="none"/><circle cx="582" cy="521.4" r="3.3" stroke="none"/><circle cx="612.6" cy="296.3" r="3.3" stroke="none"/><circle cx="655.4" cy="278.8" r="3.3" stroke="none"/><circle cx="655.4" cy="304.6" r="3.3" stroke="none"/><circle cx="683.4" cy="488.4" r="3.3" stroke="none"/><circle cx="701.5" cy="496.2" r="3.3" stroke="none"/><circle cx="734.2" cy="514" r="3.3" stroke="none"/><circle cx="746" cy="487.8" r="3.3" stroke="none"/><circle cx="727.5" cy="479.5" r="3.3" stroke="none"/><path d="M562.500 359L569 352.500" stroke-width="5.500" stroke-linecap="round" fill="none"/><path d="M580.500 381.500H593V385H598.500V433H593V438H580.500V433H574.500V385H580.500Z" fill="none" stroke-width="1"/><rect x="579" y="390" width="15" height="42" rx="7.500" fill="none" stroke-width="3" stroke-dasharray="0.800 2.200" opacity="0.8"/></g>
<g opacity="0.38" fill="#e0d8f0"><rect x="576" y="245.9" width="3" height="3"/><rect x="576" y="258.1" width="3" height="3"/><rect x="588.2" y="245.9" width="3" height="3"/><rect x="588.2" y="258.1" width="3" height="3"/><rect x="600.4" y="245.9" width="3" height="3"/><rect x="600.4" y="258.1" width="3" height="3"/><rect x="612.6" y="245.9" width="3" height="3"/><rect x="612.6" y="258.1" width="3" height="3"/><rect x="624.8" y="245.9" width="3" height="3"/><rect x="624.8" y="258.1" width="3" height="3"/><rect x="637" y="245.9" width="3" height="3"/><rect x="637" y="258.1" width="3" height="3"/><rect x="533" y="289" width="3" height="3"/><rect x="545.1" y="289" width="3" height="3"/><rect x="558" y="289" width="3" height="3"/><rect x="545.1" y="300.8" width="3" height="3"/><rect x="545.1" y="315.8" width="3" height="3"/><rect x="533" y="327.8" width="3" height="3"/><rect x="545.1" y="327.8" width="3" height="3"/><rect x="558.1" y="327.8" width="3" height="3"/><rect x="533" y="344.1" width="3" height="3"/><rect x="545.1" y="344.1" width="3" height="3"/><rect x="533" y="361.7" width="3" height="3"/><rect x="545.1" y="361.7" width="3" height="3"/><rect x="573.3" y="443.8" width="3" height="3"/><rect x="585.5" y="443.8" width="3" height="3"/><rect x="573.3" y="456" width="3" height="3"/><rect x="585.5" y="456" width="3" height="3"/><rect x="607.1" y="443" width="3" height="3"/><rect x="607.1" y="455.5" width="3" height="3"/><rect x="686" y="442.8" width="3" height="3"/><rect x="697.8" y="442.8" width="3" height="3"/><rect x="686" y="458.8" width="3" height="3"/><rect x="697.8" y="458.8" width="3" height="3"/><rect x="713.7" y="491.9" width="3" height="3"/><rect x="725.8" y="491.9" width="3" height="3"/><rect x="739.5" y="491.9" width="3" height="3"/><rect x="725.5" y="505.9" width="3" height="3"/><rect x="738.9" y="505.9" width="3" height="3"/><rect x="544.7" y="402.9" width="3.2" height="3.2"/><rect x="544.7" y="420.2" width="3.2" height="3.2"/><rect x="585" y="396.9" width="2.6" height="2.6"/><rect x="585" y="419.9" width="2.6" height="2.6"/><rect x="531.1" y="476" width="2.6" height="2.6"/><rect x="531.1" y="498" width="2.6" height="2.6"/></g>
<g opacity="0.706" stroke="#c8c8c8" fill="#c8c8c8"><rect x="631.5" y="273.5" width="10.5" height="9.5" fill="none" stroke-width="0.8"/><rect x="585.5" y="272.5" width="7.5" height="10.5" fill="none" stroke-width="0.8"/><rect x="578.3" y="278.8" width="5.4" height="13" stroke="none"/><rect x="601.1" y="278.8" width="5.4" height="13" stroke="none"/><rect x="622.3" y="278.8" width="5.4" height="13" stroke="none"/><rect x="644.3" y="278.8" width="5.4" height="13" stroke="none"/><path d="M580 321 L606 321 L602 328 L584 328Z" stroke="none"/><path d="M624 321 L650 321 L646 328 L628 328Z" stroke="none"/><circle cx="546.3" cy="404.5" r="4.9" fill="none" stroke-width="1.7"/><circle cx="546.3" cy="421.8" r="4.9" fill="none" stroke-width="1.7"/><path d="M580.4 491.800V507.500" stroke-width="2.400" stroke-linecap="butt" fill="none" opacity="0.8"/><path d="M592.6 491.800V507.500" stroke-width="2.400" stroke-linecap="butt" fill="none" opacity="0.8"/><path d="M604.8 491.800V507.500" stroke-width="2.400" stroke-linecap="butt" fill="none" opacity="0.8"/><path d="M617 491.800V507.500" stroke-width="2.400" stroke-linecap="butt" fill="none" opacity="0.8"/><path d="M629.2 491.800V507.500" stroke-width="2.400" stroke-linecap="butt" fill="none" opacity="0.8"/><path d="M641.4 491.800V507.500" stroke-width="2.400" stroke-linecap="butt" fill="none" opacity="0.8"/><path d="M653.6 491.800V507.500" stroke-width="2.400" stroke-linecap="butt" fill="none" opacity="0.8"/><rect x="735.9" y="249.1" width="5.3" height="6.6" stroke="none"/><rect x="741.9" y="249.1" width="5.3" height="6.6" stroke="none"/><rect x="735.9" y="261.4" width="5.3" height="6.6" stroke="none"/><rect x="741.9" y="261.4" width="5.3" height="6.6" stroke="none"/><rect x="735.9" y="273.7" width="5.3" height="6.6" stroke="none"/><rect x="741.9" y="273.7" width="5.3" height="6.6" stroke="none"/><rect x="735.9" y="286" width="5.3" height="6.6" stroke="none"/><rect x="741.9" y="286" width="5.3" height="6.6" stroke="none"/><rect x="735.9" y="298.3" width="5.3" height="6.6" stroke="none"/><rect x="741.9" y="298.3" width="5.3" height="6.6" stroke="none"/><rect x="735.9" y="310.6" width="5.3" height="6.6" stroke="none"/><rect x="741.9" y="310.6" width="5.3" height="6.6" stroke="none"/><rect x="735.9" y="322.9" width="5.3" height="6.6" stroke="none"/><rect x="741.9" y="322.9" width="5.3" height="6.6" stroke="none"/><rect x="735.9" y="335.2" width="5.3" height="6.6" stroke="none"/><rect x="741.9" y="335.2" width="5.3" height="6.6" stroke="none"/><rect x="735.9" y="350.2" width="5.3" height="6.6" stroke="none"/><rect x="741.9" y="350.2" width="5.3" height="6.6" stroke="none"/><rect x="735.9" y="362.5" width="5.3" height="6.6" stroke="none"/><rect x="741.9" y="362.5" width="5.3" height="6.6" stroke="none"/><rect x="735.9" y="374.8" width="5.3" height="6.6" stroke="none"/><rect x="741.9" y="374.8" width="5.3" height="6.6" stroke="none"/><rect x="735.9" y="387.1" width="5.3" height="6.6" stroke="none"/><rect x="741.9" y="387.1" width="5.3" height="6.6" stroke="none"/><rect x="735.9" y="401.6" width="5.3" height="6.6" stroke="none"/><rect x="741.9" y="401.6" width="5.3" height="6.6" stroke="none"/><rect x="735.9" y="413.9" width="5.3" height="6.6" stroke="none"/><rect x="741.9" y="413.9" width="5.3" height="6.6" stroke="none"/><rect x="735.9" y="428.9" width="5.3" height="6.6" stroke="none"/><rect x="741.9" y="428.9" width="5.3" height="6.6" stroke="none"/><rect x="735.9" y="441.2" width="5.3" height="6.6" stroke="none"/><rect x="741.9" y="441.2" width="5.3" height="6.6" stroke="none"/><rect x="569" y="472.4" width="6.6" height="5.3" stroke="none"/><rect x="569" y="478.4" width="6.6" height="5.3" stroke="none"/><rect x="581.4" y="472.4" width="6.6" height="5.3" stroke="none"/><rect x="581.4" y="478.4" width="6.6" height="5.3" stroke="none"/><rect x="593.8" y="472.4" width="6.6" height="5.3" stroke="none"/><rect x="593.8" y="478.4" width="6.6" height="5.3" stroke="none"/><rect x="606.2" y="472.4" width="6.6" height="5.3" stroke="none"/><rect x="606.2" y="478.4" width="6.6" height="5.3" stroke="none"/><rect x="618.6" y="472.4" width="6.6" height="5.3" stroke="none"/><rect x="618.6" y="478.4" width="6.6" height="5.3" stroke="none"/><rect x="631" y="472.4" width="6.6" height="5.3" stroke="none"/><rect x="631" y="478.4" width="6.6" height="5.3" stroke="none"/><rect x="710.1" y="477.2" width="5.3" height="6.6" stroke="none"/><rect x="716.1" y="477.2" width="5.3" height="6.6" stroke="none"/><rect x="733.1" y="477.2" width="5.3" height="6.6" stroke="none"/><rect x="739.1" y="477.2" width="5.3" height="6.6" stroke="none"/><rect x="648.8" y="438.4" width="8.4" height="5.3" stroke="none"/><rect x="648.8" y="444.4" width="8.4" height="5.3" stroke="none"/><rect x="659.9" y="438.4" width="7.4" height="5.3" stroke="none"/><rect x="659.9" y="444.4" width="7.4" height="5.3" stroke="none"/><rect x="689.6" y="419.5" width="4.7" height="6" stroke="none"/><rect x="695.1" y="419.5" width="4.7" height="6" stroke="none"/><rect x="689.6" y="429.5" width="4.7" height="6" stroke="none"/><rect x="695.1" y="429.5" width="4.7" height="6" stroke="none"/><rect x="712.2" y="426.8" width="6.6" height="5.3" stroke="none"/><rect x="712.2" y="432.8" width="6.6" height="5.3" stroke="none"/><rect x="706.1" y="369.2" width="13" height="8" stroke="none"/><rect x="706.1" y="381.2" width="13" height="8" stroke="none"/><rect x="695.6" y="375.5" width="7.8" height="5" stroke="none"/><rect x="695.6" y="382.5" width="7.8" height="5" stroke="none"/><rect x="709.5" y="396" width="7" height="5" stroke="none"/><rect x="709.5" y="403" width="7" height="5" stroke="none"/><rect x="663.5" y="484.7" width="5.3" height="6.6" stroke="none"/><rect x="669.5" y="484.7" width="5.3" height="6.6" stroke="none"/><rect x="663.5" y="496.4" width="5.3" height="6.6" stroke="none"/><rect x="669.5" y="496.4" width="5.3" height="6.6" stroke="none"/><rect x="706.9" y="504" width="6.6" height="5.3" stroke="none"/><rect x="706.9" y="510" width="6.6" height="5.3" stroke="none"/><rect x="684" y="503.2" width="5.6" height="3" stroke="none"/><rect x="684" y="507.9" width="5.6" height="3" stroke="none"/><rect x="684" y="512.5" width="5.6" height="3" stroke="none"/><rect x="695.9" y="503.2" width="5.6" height="3" stroke="none"/><rect x="695.9" y="512.5" width="5.6" height="3" stroke="none"/><rect x="689.5" y="504" width="6.5" height="12" fill="none" stroke-width="1"/><path d="M532 371.5 L537.6 371.5 L537.6 379.5 L532 379.5 L535 375.5Z" stroke="none"/><rect x="544.2" y="371.5" width="5.1" height="8" stroke="none"/><rect x="535.6" y="382.4" width="5.3" height="7" stroke="none"/><rect x="541.4" y="382.4" width="5.3" height="7" stroke="none"/><rect x="563.4" y="393" width="8.8" height="4.3" stroke="none"/><rect x="563.4" y="398" width="8.8" height="4.3" stroke="none"/><rect x="563.4" y="416.1" width="8.8" height="4.3" stroke="none"/><rect x="563.4" y="421.1" width="8.8" height="4.3" stroke="none"/><rect x="599.4" y="358.7" width="5.3" height="6.6" stroke="none"/><rect x="605.4" y="358.7" width="5.3" height="6.6" stroke="none"/><rect x="578.9" y="371" width="6" height="8" stroke="none"/><rect x="585.5" y="371" width="6" height="8" stroke="none"/><rect x="598.3" y="373.6" width="7" height="5.3" stroke="none"/><rect x="598.3" y="379.5" width="7" height="5.3" stroke="none"/><rect x="654.5" y="322.9" width="6" height="11" stroke="none"/><rect x="665.5" y="322.9" width="6" height="11" stroke="none"/><rect x="654.1" y="339.3" width="5.3" height="6.6" stroke="none"/><rect x="660.1" y="339.3" width="5.3" height="6.6" stroke="none"/><rect x="567.5" y="299" width="6" height="4" stroke="none"/><rect x="567.5" y="305" width="6" height="4" stroke="none"/><rect x="611.5" y="305.2" width="6" height="4" stroke="none"/><rect x="611.5" y="311.8" width="6" height="4" stroke="none"/><rect x="819.3" y="302.9" width="6.6" height="5.3" stroke="none"/><rect x="819.3" y="308.9" width="6.6" height="5.3" stroke="none"/><rect x="819.3" y="322.2" width="6.6" height="6.5" stroke="none"/><rect x="819.3" y="334.2" width="6.6" height="6.5" stroke="none"/><rect x="819.3" y="350.2" width="6.6" height="5.3" stroke="none"/><rect x="819.3" y="356.2" width="6.6" height="5.3" stroke="none"/><rect x="819.3" y="378" width="6.6" height="6.3" stroke="none"/><rect x="819.3" y="387.8" width="6.6" height="6.3" stroke="none"/><rect x="630.6" y="361" width="2.8" height="7.6" stroke="none"/><rect x="630.7" y="414.5" width="2.7" height="7.8" stroke="none"/><rect x="621.3" y="370.6" width="6.7" height="2.7" stroke="none"/><rect x="675" y="370.6" width="7.5" height="2.7" stroke="none"/><rect x="634.5" y="361" width="2.8" height="7.6" stroke="none"/><rect x="634.6" y="414.5" width="2.7" height="7.8" stroke="none"/><rect x="621.3" y="374.5" width="6.7" height="2.7" stroke="none"/><rect x="675" y="374.5" width="7.5" height="2.7" stroke="none"/><rect x="638.4" y="361" width="2.8" height="7.6" stroke="none"/><rect x="638.4" y="414.5" width="2.7" height="7.8" stroke="none"/><rect x="621.3" y="378.3" width="6.7" height="2.7" stroke="none"/><rect x="675" y="378.3" width="7.5" height="2.7" stroke="none"/><rect x="642.3" y="361" width="2.8" height="7.6" stroke="none"/><rect x="642.3" y="414.5" width="2.7" height="7.8" stroke="none"/><rect x="621.3" y="382.2" width="6.7" height="2.7" stroke="none"/><rect x="675" y="382.2" width="7.5" height="2.7" stroke="none"/><rect x="646.1" y="361" width="2.8" height="7.6" stroke="none"/><rect x="646.2" y="414.5" width="2.7" height="7.8" stroke="none"/><rect x="621.3" y="386.1" width="6.7" height="2.7" stroke="none"/><rect x="675" y="386.1" width="7.5" height="2.7" stroke="none"/><rect x="650" y="361" width="2.8" height="7.6" stroke="none"/><rect x="650" y="414.5" width="2.7" height="7.8" stroke="none"/><rect x="621.3" y="389.9" width="6.7" height="2.7" stroke="none"/><rect x="675" y="389.9" width="7.5" height="2.7" stroke="none"/><rect x="653.9" y="361" width="2.8" height="7.6" stroke="none"/><rect x="653.9" y="414.5" width="2.7" height="7.8" stroke="none"/><rect x="621.3" y="393.8" width="6.7" height="2.7" stroke="none"/><rect x="675" y="393.8" width="7.5" height="2.7" stroke="none"/><rect x="657.7" y="361" width="2.8" height="7.6" stroke="none"/><rect x="657.8" y="414.5" width="2.7" height="7.8" stroke="none"/><rect x="621.3" y="397.7" width="6.7" height="2.7" stroke="none"/><rect x="675" y="397.7" width="7.5" height="2.7" stroke="none"/><rect x="661.6" y="361" width="2.8" height="7.6" stroke="none"/><rect x="661.7" y="414.5" width="2.7" height="7.8" stroke="none"/><rect x="621.3" y="401.6" width="6.7" height="2.7" stroke="none"/><rect x="675" y="401.6" width="7.5" height="2.7" stroke="none"/><rect x="665.5" y="361" width="2.8" height="7.6" stroke="none"/><rect x="665.5" y="414.5" width="2.7" height="7.8" stroke="none"/><rect x="621.3" y="405.4" width="6.7" height="2.7" stroke="none"/><rect x="675" y="405.4" width="7.5" height="2.7" stroke="none"/><rect x="669.4" y="361" width="2.8" height="7.6" stroke="none"/><rect x="669.4" y="414.5" width="2.7" height="7.8" stroke="none"/><rect x="621.3" y="409.3" width="6.7" height="2.7" stroke="none"/><rect x="675" y="409.3" width="7.5" height="2.7" stroke="none"/><path d="M630.800 368.800H674.500V413.500H628.300V371.300Z" fill="none" stroke-width="1.200"/><circle cx="631.5" cy="372" r="0.9" stroke="none"/><path d="M552.500 231.500V275.500H598.500M617.500 275.500H663.500V231.500" fill="none" stroke-width="1"/><path d="M557.500 236.800H658.500V270H557.500Z" fill="none" stroke-width="1.800"/><rect x="598.5" y="266" width="19" height="9" fill="none" stroke-width="1"/><path d="M576.800 293V321H608.700V293" fill="none" stroke-width="1"/><path d="M620.800 293V321H652.700V293" fill="none" stroke-width="1"/><path d="M655.400 283.500L661.400 277.500H681.300L687.300 283.500V309.400H655.400Z" fill="none" stroke-width="1"/><path d="M690.200 277.500H722.400V303.400L716.400 309.400H696.200L690.200 303.400Z" fill="none" stroke-width="1"/><circle cx="671.4" cy="293.5" r="15" fill="none" stroke-width="1.4"/><circle cx="706.5" cy="293.5" r="15" fill="none" stroke-width="1.4"/><path d="M658.400 301A15 15 0 0 0 684.400 301Z" stroke="none"/><path d="M694 285A15 15 0 0 1 719 285Z" stroke="none"/><rect x="528.4" y="396" width="33" height="33.6" fill="none" stroke-width="1.6"/><path d="M525 442.500H546.800M536.200 433V453.600" stroke-width="3" fill="none"/><path d="M522 458.700H528M525 455.700V461.700" stroke-width="1" fill="none"/><rect x="575.5" y="386.300" width="21.500" height="49.500" rx="10.700" fill="none" stroke-width="1.300"/><rect x="578" y="389" width="16.500" height="44" rx="8.200" fill="none" stroke-width="1"/><path d="M552 471H521.700V505H552" fill="none" stroke-width="2.200"/><path d="M521 480H518.500V494H521M523 485H527V490H523M539.500 471.500V477L541 479V497L539.500 499V505M531 488H536" fill="none" stroke-width="1"/><path d="M555.200 510.200H679.500V552.600H555.200Z" fill="none" stroke-width="1"/><path d="M558 522.500H573.100V541H558ZM575.300 510V553M606.200 553V517.500H627.400V553M561.400 510V507.400H565.800V510M669 510V507.400H673V510M582 520V530C582 533 584 534 585.500 534C587 534 589 533 589 530V520M581 553V548H590V553" fill="none" stroke-width="1"/><path d="M617.600 523V551" fill="none" stroke-width="3"/><path d="M654.2 536.5 L661 549.9 L647.5 549.9Z" stroke="none"/><path d="M814.500 250V394M814.500 406V420M814.500 430V447.600" fill="none" stroke-width="1.200"/><rect x="691.5" y="344.500" width="23" height="9" fill="none" stroke-width="1"/><path d="M694.500 354V364L697 362L700 363L703 362L706 363L709 362L711 363V354" fill="none" stroke-width="1"/><path d="M770.500 239.200H778.500M774.500 235.200V243.200M768 244.200H773.500M770.700 241.500V247M782 241H791M786.500 233V241M793 240H800M796.500 236.500V243.500" fill="none" stroke-width="1.800"/></g>
<path d="M532 284.4L528.4 287.9V293.1L532 296.6M537 284.4L540.6 287.9V293.1L537 296.6M532 284.4H537M532 296.6H537M544.1 284.4L540.5 287.9V293.1L544.1 296.6M549.1 284.4L552.8 287.9V293.1L549.1 296.6M544.1 284.4H549.1M544.1 296.6H549.1M557 284.4L553.4 287.9V293.1L557 296.6M562 284.4L565.6 287.9V293.1L562 296.6M557 284.4H562M557 296.6H562M544.1 296.2L540.5 299.8V304.9L544.1 308.4M549.1 296.2L552.8 299.8V304.9L549.1 308.4M544.1 296.2H549.1M544.1 308.4H549.1M544.1 311.2L540.5 314.8V319.9L544.1 323.4M549.1 311.2L552.8 314.8V319.9L549.1 323.4M544.1 311.2H549.1M544.1 323.4H549.1M532 323.2L528.4 326.8V331.9L532 335.4M537 323.2L540.6 326.8V331.9L537 335.4M532 323.2H537M532 335.4H537M544.1 323.2L540.5 326.8V331.9L544.1 335.4M549.1 323.2L552.8 326.8V331.9L549.1 335.4M544.1 323.2H549.1M544.1 335.4H549.1M557.1 323.2L553.5 326.8V331.9L557.1 335.4M562.1 323.2L565.8 326.8V331.9L562.1 335.4M557.1 323.2H562.1M557.1 335.4H562.1M532 339.5L528.4 343.1V348.2L532 351.8M537 339.5L540.6 343.1V348.2L537 351.8M532 339.5H537M532 351.8H537M544.1 339.5L540.5 343.1V348.2L544.1 351.8M549.1 339.5L552.8 343.1V348.2L549.1 351.8M544.1 339.5H549.1M544.1 351.8H549.1M532 357.1L528.4 360.6V365.8L532 369.3M537 357.1L540.6 360.6V365.8L537 369.3M532 357.1H537M532 369.3H537M544.1 357.1L540.5 360.6V365.8L544.1 369.3M549.1 357.1L552.8 360.6V365.8L549.1 369.3M544.1 357.1H549.1M544.1 369.3H549.1M759.8 246.2L756.1 249.8V255L759.8 258.6M764.8 246.2L768.4 249.8V255L764.8 258.6M759.8 246.2H764.8M759.8 258.6L756.1 262.1V267.2L759.8 270.8M764.8 258.6L768.4 262.1V267.2L764.8 270.8M759.8 270.9L756.1 274.4V279.6L759.8 283.1M764.8 270.9L768.4 274.4V279.6L764.8 283.1M759.8 283.2L756.1 286.8V291.9L759.8 295.4M764.8 283.2L768.4 286.8V291.9L764.8 295.4M759.8 295.5L756.1 299.1V304.2L759.8 307.8M764.8 295.5L768.4 299.1V304.2L764.8 307.8M759.8 307.8L756.1 311.3V316.4L759.8 320M764.8 307.8L768.4 311.3V316.4L764.8 320M759.8 320.1L756.1 323.6V328.8L759.8 332.3M764.8 320.1L768.4 323.6V328.8L764.8 332.3M759.8 332.4L756.1 335.9V341.1L759.8 344.6M764.8 332.4L768.4 335.9V341.1L764.8 344.6M759.8 344.6H764.8M759.8 347.4L756.1 350.9V356.1L759.8 359.6M764.8 347.4L768.4 350.9V356.1L764.8 359.6M759.8 347.4H764.8M759.8 359.7L756.1 363.2V368.4L759.8 371.9M764.8 359.7L768.4 363.2V368.4L764.8 371.9M759.8 372L756.1 375.6V380.7L759.8 384.2M764.8 372L768.4 375.6V380.7L764.8 384.2M759.8 384.2L756.1 387.8V392.9L759.8 396.5M764.8 384.2L768.4 387.8V392.9L764.8 396.5M759.8 396.5H764.8M759.8 398.8L756.1 402.3V407.4L759.8 411M764.8 398.8L768.4 402.3V407.4L764.8 411M759.8 398.8H764.8M759.8 411.1L756.1 414.6V419.8L759.8 423.3M764.8 411.1L768.4 414.6V419.8L764.8 423.3M759.8 423.3H764.8M759.8 426.1L756.1 429.6V434.8L759.8 438.3M764.8 426.1L768.4 429.6V434.8L764.8 438.3M759.8 426.1H764.8M759.8 438.4L756.1 441.9V447.1L759.8 450.6M764.8 438.4L768.4 441.9V447.1L764.8 450.6M759.8 450.6H764.8M759.8 456.1L756.1 459.6V464.8L759.8 468.3M764.8 456.1L768.4 459.6V464.8L764.8 468.3M759.8 456.1H764.8M759.8 468.5L756.1 472.1V477.2L759.8 480.8M764.8 468.5L768.4 472.1V477.2L764.8 480.8M759.8 480.9L756.1 484.4V489.6L759.8 493.1M764.8 480.9L768.4 484.4V489.6L764.8 493.1M759.8 493.2L756.1 496.8V501.9L759.8 505.4M764.8 493.2L768.4 496.8V501.9L764.8 505.4M759.8 505.4H764.8M759.8 517.1L756.1 520.7V525.8L759.8 529.4M764.8 517.1L768.4 520.7V525.8L764.8 529.4M759.8 517.1H764.8M759.8 529.9L756.1 533.5V538.5L759.8 542.1M764.8 529.9L768.4 533.5V538.5L764.8 542.1M759.8 542.1H764.8M772 246.2L768.4 249.8V255L772 258.6M777 246.2L780.6 249.8V255L777 258.6M772 246.2H777M772 258.6L768.4 262.1V267.2L772 270.8M777 258.6L780.6 262.1V267.2L777 270.8M772 270.9L768.4 274.4V279.6L772 283.1M777 270.9L780.6 274.4V279.6L777 283.1M772 283.2L768.4 286.8V291.9L772 295.4M777 283.2L780.6 286.8V291.9L777 295.4M772 295.5L768.4 299.1V304.2L772 307.8M777 295.5L780.6 299.1V304.2L777 307.8M772 307.8L768.4 311.3V316.4L772 320M777 307.8L780.6 311.3V316.4L777 320M772 320.1L768.4 323.6V328.8L772 332.3M777 320.1L780.6 323.6V328.8L777 332.3M772 332.4L768.4 335.9V341.1L772 344.6M777 332.4L780.6 335.9V341.1L777 344.6M772 344.6H777M772 347.4L768.4 350.9V356.1L772 359.6M777 347.4L780.6 350.9V356.1L777 359.6M772 347.4H777M772 359.7L768.4 363.2V368.4L772 371.9M777 359.7L780.6 363.2V368.4L777 371.9M772 372L768.4 375.6V380.7L772 384.2M777 372L780.6 375.6V380.7L777 384.2M772 384.2L768.4 387.8V392.9L772 396.5M777 384.2L780.6 387.8V392.9L777 396.5M772 396.5H777M772 398.8L768.4 402.3V407.4L772 411M777 398.8L780.6 402.3V407.4L777 411M772 398.8H777M772 411.1L768.4 414.6V419.8L772 423.3M777 411.1L780.6 414.6V419.8L777 423.3M772 423.3H777M772 426.1L768.4 429.6V434.8L772 438.3M777 426.1L780.6 429.6V434.8L777 438.3M772 426.1H777M772 438.4L768.4 441.9V447.1L772 450.6M777 438.4L780.6 441.9V447.1L777 450.6M772 450.6H777M772 456.1L768.4 459.6V464.8L772 468.3M777 456.1L780.6 459.6V464.8L777 468.3M772 456.1H777M772 468.5L768.4 472.1V477.2L772 480.8M777 468.5L780.6 472.1V477.2L777 480.8M772 480.9L768.4 484.4V489.6L772 493.1M777 480.9L780.6 484.4V489.6L777 493.1M772 493.2L768.4 496.8V501.9L772 505.4M777 493.2L780.6 496.8V501.9L777 505.4M772 505.4H777M772 517.1L768.4 520.7V525.8L772 529.4M777 517.1L780.6 520.7V525.8L777 529.4M772 517.1H777M772 529.9L768.4 533.5V538.5L772 542.1M777 529.9L780.6 533.5V538.5L777 542.1M772 542.1H777M784.2 246.2L780.6 249.8V255L784.2 258.6M789.2 246.2L792.9 249.8V255L789.2 258.6M784.2 246.2H789.2M784.2 258.6L780.6 262.1V267.2L784.2 270.8M789.2 258.6L792.9 262.1V267.2L789.2 270.8M784.2 270.9L780.6 274.4V279.6L784.2 283.1M789.2 270.9L792.9 274.4V279.6L789.2 283.1M784.2 283.2L780.6 286.8V291.9L784.2 295.4M789.2 283.2L792.9 286.8V291.9L789.2 295.4M784.2 295.5L780.6 299.1V304.2L784.2 307.8M789.2 295.5L792.9 299.1V304.2L789.2 307.8M784.2 307.8L780.6 311.3V316.4L784.2 320M789.2 307.8L792.9 311.3V316.4L789.2 320M784.2 320.1L780.6 323.6V328.8L784.2 332.3M789.2 320.1L792.9 323.6V328.8L789.2 332.3M784.2 332.4L780.6 335.9V341.1L784.2 344.6M789.2 332.4L792.9 335.9V341.1L789.2 344.6M784.2 344.6H789.2M784.2 347.4L780.6 350.9V356.1L784.2 359.6M789.2 347.4L792.9 350.9V356.1L789.2 359.6M784.2 347.4H789.2M784.2 359.7L780.6 363.2V368.4L784.2 371.9M789.2 359.7L792.9 363.2V368.4L789.2 371.9M784.2 372L780.6 375.6V380.7L784.2 384.2M789.2 372L792.9 375.6V380.7L789.2 384.2M784.2 384.2L780.6 387.8V392.9L784.2 396.5M789.2 384.2L792.9 387.8V392.9L789.2 396.5M784.2 396.5H789.2M784.2 398.8L780.6 402.3V407.4L784.2 411M789.2 398.8L792.9 402.3V407.4L789.2 411M784.2 398.8H789.2M784.2 411.1L780.6 414.6V419.8L784.2 423.3M789.2 411.1L792.9 414.6V419.8L789.2 423.3M784.2 423.3H789.2M784.2 426.1L780.6 429.6V434.8L784.2 438.3M789.2 426.1L792.9 429.6V434.8L789.2 438.3M784.2 426.1H789.2M784.2 438.4L780.6 441.9V447.1L784.2 450.6M789.2 438.4L792.9 441.9V447.1L789.2 450.6M784.2 450.6H789.2M784.2 456.1L780.6 459.6V464.8L784.2 468.3M789.2 456.1L792.9 459.6V464.8L789.2 468.3M784.2 456.1H789.2M784.2 468.5L780.6 472.1V477.2L784.2 480.8M789.2 468.5L792.9 472.1V477.2L789.2 480.8M784.2 480.9L780.6 484.4V489.6L784.2 493.1M789.2 480.9L792.9 484.4V489.6L789.2 493.1M784.2 493.2L780.6 496.8V501.9L784.2 505.4M789.2 493.2L792.9 496.8V501.9L789.2 505.4M784.2 505.4H789.2M784.2 517.1L780.6 520.7V525.8L784.2 529.4M789.2 517.1L792.9 520.7V525.8L789.2 529.4M784.2 517.1H789.2M784.2 529.9L780.6 533.5V538.5L784.2 542.1M789.2 529.9L792.9 533.5V538.5L789.2 542.1M784.2 542.1H789.2M796.7 246.2L793.1 249.8V255L796.7 258.6M801.8 246.2L805.4 249.8V255L801.8 258.6M796.7 246.2H801.8M796.7 258.6L793.1 262.1V267.2L796.7 270.8M801.8 258.6L805.4 262.1V267.2L801.8 270.8M796.7 270.9L793.1 274.4V279.6L796.7 283.1M801.8 270.9L805.4 274.4V279.6L801.8 283.1M796.7 283.2L793.1 286.8V291.9L796.7 295.4M801.8 283.2L805.4 286.8V291.9L801.8 295.4M796.7 295.5L793.1 299.1V304.2L796.7 307.8M801.8 295.5L805.4 299.1V304.2L801.8 307.8M796.7 307.8L793.1 311.3V316.4L796.7 320M801.8 307.8L805.4 311.3V316.4L801.8 320M796.7 320.1L793.1 323.6V328.8L796.7 332.3M801.8 320.1L805.4 323.6V328.8L801.8 332.3M796.7 332.4L793.1 335.9V341.1L796.7 344.6M801.8 332.4L805.4 335.9V341.1L801.8 344.6M796.7 344.6H801.8M796.7 347.4L793.1 350.9V356.1L796.7 359.6M801.8 347.4L805.4 350.9V356.1L801.8 359.6M796.7 347.4H801.8M796.7 359.7L793.1 363.2V368.4L796.7 371.9M801.8 359.7L805.4 363.2V368.4L801.8 371.9M796.7 372L793.1 375.6V380.7L796.7 384.2M801.8 372L805.4 375.6V380.7L801.8 384.2M796.7 384.2L793.1 387.8V392.9L796.7 396.5M801.8 384.2L805.4 387.8V392.9L801.8 396.5M796.7 396.5H801.8M796.7 398.8L793.1 402.3V407.4L796.7 411M801.8 398.8L805.4 402.3V407.4L801.8 411M796.7 398.8H801.8M796.7 411.1L793.1 414.6V419.8L796.7 423.3M801.8 411.1L805.4 414.6V419.8L801.8 423.3M796.7 423.3H801.8M796.7 426.1L793.1 429.6V434.8L796.7 438.3M801.8 426.1L805.4 429.6V434.8L801.8 438.3M796.7 426.1H801.8M796.7 438.4L793.1 441.9V447.1L796.7 450.6M801.8 438.4L805.4 441.9V447.1L801.8 450.6M796.7 450.6H801.8M796.7 456.1L793.1 459.6V464.8L796.7 468.3M801.8 456.1L805.4 459.6V464.8L801.8 468.3M796.7 456.1H801.8M796.7 468.5L793.1 472.1V477.2L796.7 480.8M801.8 468.5L805.4 472.1V477.2L801.8 480.8M796.7 480.9L793.1 484.4V489.6L796.7 493.1M801.8 480.9L805.4 484.4V489.6L801.8 493.1M796.7 493.2L793.1 496.8V501.9L796.7 505.4M801.8 493.2L805.4 496.8V501.9L801.8 505.4M796.7 505.4H801.8M796.7 517.1L793.1 520.7V525.8L796.7 529.4M801.8 517.1L805.4 520.7V525.8L801.8 529.4M796.7 517.1H801.8M796.7 529.9L793.1 533.5V538.5L796.7 542.1M801.8 529.9L805.4 533.5V538.5L801.8 542.1M796.7 542.1H801.8M572.2 439.2L568.6 442.8V447.9L572.2 451.4M577.3 439.2L580.9 442.8V447.9L577.3 451.4M572.2 439.2H577.3M572.2 451.4H577.3M584.5 439.2L580.9 442.8V447.9L584.5 451.4M589.5 439.2L593.1 442.8V447.9L589.5 451.4M584.5 439.2H589.5M584.5 451.4H589.5M572.2 451.4L568.6 454.9V460.1L572.2 463.6M577.3 451.4L580.9 454.9V460.1L577.3 463.6M572.2 451.4H577.3M572.2 463.6H577.3M584.5 451.4L580.9 454.9V460.1L584.5 463.6M589.5 451.4L593.1 454.9V460.1L589.5 463.6M584.5 451.4H589.5M584.5 463.6H589.5M606.1 438.4L602.5 441.9V447.1L606.1 450.6M611.1 438.4L614.8 441.9V447.1L611.1 450.6M606.1 438.4H611.1M606.1 450.6H611.1M606.1 450.9L602.5 454.4V459.6L606.1 463.1M611.1 450.9L614.8 454.4V459.6L611.1 463.1M606.1 450.9H611.1M606.1 463.1H611.1M685 438.2L681.4 441.8V446.9L685 450.4M690 438.2L693.6 441.8V446.9L690 450.4M685 438.2H690M685 450.4H690M696.8 438.2L693.1 441.8V446.9L696.8 450.4M701.8 438.2L705.4 441.8V446.9L701.8 450.4M696.8 438.2H701.8M696.8 450.4H701.8M685 454.2L681.4 457.8V462.9L685 466.4M690 454.2L693.6 457.8V462.9L690 466.4M685 454.2H690M685 466.4H690M696.8 454.2L693.1 457.8V462.9L696.8 466.4M701.8 454.2L705.4 457.8V462.9L701.8 466.4M696.8 454.2H701.8M696.8 466.4H701.8M712.7 487.2L709.1 490.8V495.9L712.7 499.5M717.8 487.2L721.4 490.8V495.9L717.8 499.5M712.7 487.2H717.8M712.7 499.5H717.8M724.8 487.2L721.1 490.8V495.9L724.8 499.5M729.8 487.2L733.4 490.8V495.9L729.8 499.5M724.8 487.2H729.8M724.8 499.5H729.8M738.5 487.2L734.9 490.8V495.9L738.5 499.5M743.5 487.2L747.1 490.8V495.9L743.5 499.5M738.5 487.2H743.5M738.5 499.5H743.5M724.5 501.2L720.9 504.8V509.9L724.5 513.5M729.5 501.2L733.1 504.8V509.9L729.5 513.5M724.5 501.2H729.5M724.5 513.5H729.5M737.9 501.2L734.2 504.8V509.9L737.9 513.5M742.9 501.2L746.5 504.8V509.9L742.9 513.5M737.9 501.2H742.9M737.9 513.5H742.9" fill="none" stroke="#fff" stroke-width="0.8" opacity="0.8"/>
<g><rect x="515.2" y="231.2" width="321.3" height="320.3" fill="none" stroke="#cacaca" stroke-width="1.6"/><circle cx="530.5" cy="246.5" r="13.8" fill="none" stroke="#a82a2a" stroke-width="1"/><circle cx="530.5" cy="246.5" r="8.3" fill="none" stroke="#c8c8c8" stroke-width="0.9"/><path d="M525 246.5H536M530.5 241V252" stroke="#c8c8c8" stroke-width="0.9"/><circle cx="703.7" cy="246.3" r="13.8" fill="none" stroke="#a82a2a" stroke-width="1"/><circle cx="703.7" cy="246.3" r="8.3" fill="none" stroke="#c8c8c8" stroke-width="0.9"/><path d="M698.2 246.3H709.2M703.7 240.8V251.8" stroke="#c8c8c8" stroke-width="0.9"/><circle cx="820.6" cy="246.4" r="13.8" fill="none" stroke="#a82a2a" stroke-width="1"/><circle cx="820.6" cy="246.4" r="8.3" fill="none" stroke="#c8c8c8" stroke-width="0.9"/><path d="M815.1 246.4H826.1M820.6 240.9V251.9" stroke="#c8c8c8" stroke-width="0.9"/><circle cx="530.5" cy="536.4" r="13.8" fill="none" stroke="#a82a2a" stroke-width="1"/><circle cx="530.5" cy="536.4" r="8.3" fill="none" stroke="#c8c8c8" stroke-width="0.9"/><path d="M525 536.4H536M530.5 530.9V541.9" stroke="#c8c8c8" stroke-width="0.9"/><circle cx="703.7" cy="536.4" r="13.8" fill="none" stroke="#a82a2a" stroke-width="1"/><circle cx="703.7" cy="536.4" r="8.3" fill="none" stroke="#c8c8c8" stroke-width="0.9"/><path d="M698.2 536.4H709.2M703.7 530.9V541.9" stroke="#c8c8c8" stroke-width="0.9"/><circle cx="820.6" cy="536.4" r="13.8" fill="none" stroke="#a82a2a" stroke-width="1"/><circle cx="820.6" cy="536.4" r="8.3" fill="none" stroke="#c8c8c8" stroke-width="0.9"/><path d="M815.1 536.4H826.1M820.6 530.9V541.9" stroke="#c8c8c8" stroke-width="0.9"/><path d="M510 551.500H527M515.500 541V556" stroke="#fff" stroke-width="1" stroke-dasharray="1 1"/><g fill="#8c8cdc" opacity=".75"><rect x="639.5" y="385.5" width="8" height="6"/><rect x="639.5" y="394.500" width="8" height="6.500"/></g><path d="M681 325.500V316.500a3.200 3.200 0 0 1 6.400 0V320q0 3 3 3H691.500a3 3 0 0 1 6 0q0 3.500 -3 3.500H679.500M688.500 326.500V330.500M694 326.500L697.500 330.500" fill="none" stroke="#d4d4d4" stroke-width="1.700"/></g>
<g opacity="0.85" stroke="#fff" fill="none"><path d="M736.3 252.4H746.7M741.5 247.2V257.6" stroke-width="1"/><path d="M736.3 264.7H746.7M741.5 259.5V269.9" stroke-width="1"/><path d="M736.3 277H746.7M741.5 271.8V282.2" stroke-width="1"/><path d="M736.3 289.3H746.7M741.5 284.1V294.5" stroke-width="1"/><path d="M736.3 301.6H746.7M741.5 296.4V306.8" stroke-width="1"/><path d="M736.3 313.9H746.7M741.5 308.7V319.1" stroke-width="1"/><path d="M736.3 326.2H746.7M741.5 321V331.4" stroke-width="1"/><path d="M736.3 338.5H746.7M741.5 333.3V343.7" stroke-width="1"/><path d="M736.3 353.5H746.7M741.5 348.3V358.7" stroke-width="1"/><path d="M736.3 365.8H746.7M741.5 360.6V371" stroke-width="1"/><path d="M736.3 378.1H746.7M741.5 372.9V383.3" stroke-width="1"/><path d="M736.3 390.4H746.7M741.5 385.2V395.6" stroke-width="1"/><path d="M736.3 404.9H746.7M741.5 399.7V410.1" stroke-width="1"/><path d="M736.3 417.2H746.7M741.5 412V422.4" stroke-width="1"/><path d="M736.3 432.2H746.7M741.5 427V437.4" stroke-width="1"/><path d="M736.3 444.5H746.7M741.5 439.3V449.7" stroke-width="1"/><path d="M567.8 478H576.8M572.3 473.5V482.5" stroke-width="1"/><path d="M580.2 478H589.2M584.7 473.5V482.5" stroke-width="1"/><path d="M592.6 478H601.6M597.1 473.5V482.5" stroke-width="1"/><path d="M605 478H614M609.5 473.5V482.5" stroke-width="1"/><path d="M617.4 478H626.4M621.9 473.5V482.5" stroke-width="1"/><path d="M629.8 478H638.8M634.3 473.5V482.5" stroke-width="1"/><path d="M710.6 480.5H721M715.8 475.3V485.7" stroke-width="1"/><path d="M733.5 480.5H743.9M738.7 475.3V485.7" stroke-width="1"/><path d="M648.5 444H657.5M653 439.5V448.5" stroke-width="1"/><path d="M659.1 444H668.1M663.6 439.5V448.5" stroke-width="1"/><path d="M689.5 422.5H699.9M694.7 417.3V427.7" stroke-width="1"/><path d="M689.5 432.5H699.9M694.7 427.3V437.7" stroke-width="1"/><path d="M711 432.4H720M715.5 427.9V436.9" stroke-width="1"/><path d="M708.1 379.2H717.1M712.6 374.7V383.7" stroke-width="1"/><path d="M695 381.5H704M699.5 377V386" stroke-width="1"/><path d="M708.5 402H717.5M713 397.5V406.5" stroke-width="1"/><path d="M663.9 488H674.3M669.1 482.8V493.2" stroke-width="1"/><path d="M663.9 499.7H674.3M669.1 494.5V504.9" stroke-width="1"/><path d="M705.7 509.6H714.7M710.2 505.1V514.1" stroke-width="1"/><path d="M688.7 509.8H696.7M692.7 505.8V513.8" stroke-width="1"/><path d="M535.6 375.5H545.6M540.6 370.5V380.5" stroke-width="1"/><path d="M535.9 385.9H546.3M541.1 380.7V391.1" stroke-width="1"/><path d="M563.3 397.6H572.3M567.8 393.1V402.1" stroke-width="1"/><path d="M563.3 420.7H572.3M567.8 416.2V425.2" stroke-width="1"/><path d="M599.8 362H610.2M605 356.8V367.2" stroke-width="1"/><path d="M580 375H590.4M585.2 369.8V380.2" stroke-width="1"/><path d="M597.3 379.2H606.3M601.8 374.7V383.7" stroke-width="1"/><path d="M657.8 328.4H668.2M663 323.2V333.6" stroke-width="1"/><path d="M654.6 342.6H665M659.8 337.4V347.8" stroke-width="1"/><path d="M566 304H575M570.5 299.5V308.5" stroke-width="1"/><path d="M610 310.5H619M614.5 306V315" stroke-width="1"/><path d="M818.1 308.5H827.1M822.6 304V313" stroke-width="1"/><path d="M818.1 331.5H827.1M822.6 327V336" stroke-width="1"/><path d="M818.1 355.8H827.1M822.6 351.3V360.3" stroke-width="1"/><path d="M818.1 386H827.1M822.6 381.5V390.5" stroke-width="1"/><path d="M645.9 391.3H656.9M651.4 385.8V396.8" stroke-width="1"/><path d="M603.5 253.5H612.5M608 249V258" stroke-width="1"/><path d="M587.2 303.4H598.2M592.7 297.9V308.9" stroke-width="1"/><path d="M631 303.4H642M636.5 297.9V308.9" stroke-width="1"/><path d="M664.4 293.5H678.4M671.4 286.5V300.5" stroke-width="1"/><path d="M699.5 293.5H713.5M706.5 286.5V300.5" stroke-width="1"/><path d="M659 293.500H662M694 293.500H697M660.500 291.500V295.500M695.500 291.500V295.500" stroke-width="1"/><path d="M541.3 413.2H551.3M546.3 408.2V418.2" stroke-width="1"/><path d="M580.3 409.5H592.3M586.3 403.5V415.5" stroke-width="1"/><path d="M534 488.5H543M538.5 484V493" stroke-width="1"/><path d="M757.8 295.5H766.8M762.3 291.3V299.6" stroke-width="1"/><path d="M770 295.5H779M774.5 291.3V299.6" stroke-width="1"/><path d="M782.2 295.5H791.2M786.7 291.3V299.6" stroke-width="1"/><path d="M794.7 295.5H803.7M799.2 291.3V299.6" stroke-width="1"/><path d="M757.8 372H766.8M762.3 367.8V376.1" stroke-width="1"/><path d="M770 372H779M774.5 367.8V376.1" stroke-width="1"/><path d="M782.2 372H791.2M786.7 367.8V376.1" stroke-width="1"/><path d="M794.7 372H803.7M799.2 367.8V376.1" stroke-width="1"/><path d="M757.8 411H766.8M762.3 406.9V415.2" stroke-width="1"/><path d="M770 411H779M774.5 406.9V415.2" stroke-width="1"/><path d="M782.2 411H791.2M786.7 406.9V415.2" stroke-width="1"/><path d="M794.7 411H803.7M799.2 406.9V415.2" stroke-width="1"/><path d="M757.8 438.4H766.8M762.3 434.2V442.5" stroke-width="1"/><path d="M770 438.4H779M774.5 434.2V442.5" stroke-width="1"/><path d="M782.2 438.4H791.2M786.7 434.2V442.5" stroke-width="1"/><path d="M794.7 438.4H803.7M799.2 434.2V442.5" stroke-width="1"/><path d="M757.8 480.8H766.8M762.3 476.6V485" stroke-width="1"/><path d="M770 480.8H779M774.5 476.6V485" stroke-width="1"/><path d="M782.2 480.8H791.2M786.7 476.6V485" stroke-width="1"/><path d="M794.7 480.8H803.7M799.2 476.6V485" stroke-width="1"/><path d="M775.6 523.2H785.6M780.6 518.2V528.2" stroke-width="1"/><path d="M775.6 536H785.6M780.6 531V541" stroke-width="1"/><path d="M780.600 521V538" stroke-width="1"/><path d="M542.6 302.3H550.6M546.6 298.3V306.3" stroke-width="1"/><path d="M542.6 317.3H550.6M546.6 313.3V321.3" stroke-width="1"/><path d="M530.5 290.5H538.5M534.5 286.5V294.5" stroke-width="1"/><path d="M555.6 329.3H563.6M559.6 325.3V333.3" stroke-width="1"/><path d="M537 345.6H544M540.5 342.1V349.1" stroke-width="1"/><path d="M537 363.2H544M540.5 359.7V366.7" stroke-width="1"/><path d="M577.5 445.3H584.5M581 441.8V448.8" stroke-width="1"/><path d="M577.5 457.5H584.5M581 454V461" stroke-width="1"/><path d="M604.6 450.7H612.6M608.6 446.7V454.7" stroke-width="1"/><path d="M689.9 444.3H696.9M693.4 440.8V447.8" stroke-width="1"/><path d="M689.9 460.3H696.9M693.4 456.8V463.8" stroke-width="1"/><path d="M711.2 493.4H719.2M715.2 489.4V497.4" stroke-width="1"/><path d="M729.7 507.4H737.7M733.7 503.4V511.4" stroke-width="1"/><path d="M614.5 505H625.5M620 499.5V510.5" stroke-width="1.3"/></g>
<g opacity="0.9" fill="#dcdcdc" font-family="'Liberation Mono','DejaVu Sans Mono',monospace"><text transform="translate(565 250.5)" font-size="10.6" text-anchor="start">2</text><text transform="translate(565 262.5)" font-size="10.6" text-anchor="start">1</text><text transform="translate(602 274)" font-size="10" text-anchor="start" textLength="11" lengthAdjust="spacingAndGlyphs">12</text><text transform="translate(552.5 283)" font-size="11.2" text-anchor="start" textLength="15.5" lengthAdjust="spacingAndGlyphs">BAT</text><text transform="translate(527 283)" font-size="11.2" text-anchor="start" textLength="12" lengthAdjust="spacingAndGlyphs">+5</text><text transform="translate(672.5 274) rotate(-90)" font-size="10.6" text-anchor="start" textLength="33" lengthAdjust="spacingAndGlyphs">BRIDGE</text><text transform="translate(520.5 285) rotate(90)" font-size="10" text-anchor="start" textLength="12" lengthAdjust="spacingAndGlyphs">PA</text><text transform="translate(520.5 308) rotate(90)" font-size="10" text-anchor="start" textLength="28" lengthAdjust="spacingAndGlyphs">PBCD</text><text transform="translate(520.5 338) rotate(90)" font-size="10" text-anchor="start" textLength="11" lengthAdjust="spacingAndGlyphs">+5</text><text transform="translate(520.5 356) rotate(90)" font-size="10" text-anchor="start" textLength="26" lengthAdjust="spacingAndGlyphs">+3.3</text><text transform="translate(556.5 299) rotate(90)" font-size="8.8" text-anchor="start" textLength="19" lengthAdjust="spacingAndGlyphs">+3.3</text><text transform="translate(572 338)" font-size="10" text-anchor="start" textLength="67" lengthAdjust="spacingAndGlyphs">OR-AVR-M32-D</text><text transform="translate(594 348.5)" font-size="10" text-anchor="start" textLength="13" lengthAdjust="spacingAndGlyphs">v.1</text><text transform="translate(699 329.5)" font-size="10" text-anchor="start" textLength="24" lengthAdjust="spacingAndGlyphs">OPEN</text><text transform="translate(681 338.5)" font-size="10" text-anchor="start" textLength="42" lengthAdjust="spacingAndGlyphs">ROBOTICS</text><text transform="translate(693.5 352)" font-size="8.8" text-anchor="start" textLength="19" lengthAdjust="spacingAndGlyphs">ROBO</text><text transform="translate(696 361.5)" font-size="8.8" text-anchor="start" textLength="14" lengthAdjust="spacingAndGlyphs">BUS</text><text transform="translate(519.5 393) rotate(90)" font-size="10.6" text-anchor="start" textLength="43" lengthAdjust="spacingAndGlyphs">BATTERY</text><text transform="translate(553.5 451)" font-size="9.4" text-anchor="start" textLength="13" lengthAdjust="spacingAndGlyphs">=5</text><text transform="translate(553.5 463.5)" font-size="9.4" text-anchor="start" textLength="13" lengthAdjust="spacingAndGlyphs">=M</text><text transform="translate(601.3 462.5) rotate(-90)" font-size="10.6" text-anchor="start" textLength="21" lengthAdjust="spacingAndGlyphs">UART</text><text transform="translate(623.5 460) rotate(-90)" font-size="10.6" text-anchor="start" textLength="22.5" lengthAdjust="spacingAndGlyphs">XTAL</text><text transform="translate(521 517.5)" font-size="10" text-anchor="start" textLength="27" lengthAdjust="spacingAndGlyphs">RESET</text><text transform="translate(569.5 538.5) rotate(-90)" font-size="10.6" text-anchor="start" textLength="13" lengthAdjust="spacingAndGlyphs">14</text><text transform="translate(665 474.5)" font-size="10" text-anchor="start" textLength="42" lengthAdjust="spacingAndGlyphs">I2C p/up</text><text transform="translate(689 487.5)" font-size="10" text-anchor="start" textLength="19" lengthAdjust="spacingAndGlyphs">+3.3</text><text transform="translate(739 487)" font-size="10" text-anchor="start" textLength="13" lengthAdjust="spacingAndGlyphs">+5</text><text transform="translate(724 523)" font-size="10" text-anchor="start" textLength="23" lengthAdjust="spacingAndGlyphs">PROG</text><text transform="translate(756 540.5) rotate(-90)" font-size="10" text-anchor="start" textLength="22" lengthAdjust="spacingAndGlyphs">E2E1</text><text transform="translate(808 466)" font-size="10" text-anchor="start" textLength="17" lengthAdjust="spacingAndGlyphs">GND</text><text transform="translate(808 478.5)" font-size="10" text-anchor="start" textLength="16" lengthAdjust="spacingAndGlyphs">SCL</text><text transform="translate(808 490.5)" font-size="10" text-anchor="start" textLength="16" lengthAdjust="spacingAndGlyphs">SDA</text><text transform="translate(810 502.5)" font-size="10" text-anchor="start" textLength="14" lengthAdjust="spacingAndGlyphs">+5V</text><text transform="translate(833.5 489) rotate(-90)" font-size="10" text-anchor="start" textLength="14.5" lengthAdjust="spacingAndGlyphs">I2C</text><text transform="translate(759.2 246.5) scale(1 1.55)" font-size="9.5" text-anchor="start" textLength="6" lengthAdjust="spacingAndGlyphs">D</text><text transform="translate(801.5 244) scale(1 1.45)" font-size="9.5" text-anchor="start" textLength="6" lengthAdjust="spacingAndGlyphs">5</text><text transform="translate(806 249.4) rotate(90)" font-size="9.4" text-anchor="start">0</text><text transform="translate(806 261.7) rotate(90)" font-size="9.4" text-anchor="start">1</text><text transform="translate(806 274) rotate(90)" font-size="9.4" text-anchor="start">2</text><text transform="translate(806 286.3) rotate(90)" font-size="9.4" text-anchor="start">3</text><text transform="translate(806 298.6) rotate(90)" font-size="9.4" text-anchor="start">4</text><text transform="translate(806 310.9) rotate(90)" font-size="9.4" text-anchor="start">5</text><text transform="translate(806 323.2) rotate(90)" font-size="9.4" text-anchor="start">6</text><text transform="translate(806 335.5) rotate(90)" font-size="9.4" text-anchor="start">7</text><text transform="translate(806 350.5) rotate(90)" font-size="9.4" text-anchor="start">7</text><text transform="translate(806 362.8) rotate(90)" font-size="9.4" text-anchor="start">6</text><text transform="translate(806 375.1) rotate(90)" font-size="9.4" text-anchor="start">5</text><text transform="translate(806 387.4) rotate(90)" font-size="9.4" text-anchor="start">4</text><text transform="translate(806 401.9) rotate(90)" font-size="9.4" text-anchor="start">3</text><text transform="translate(806 414.2) rotate(90)" font-size="9.4" text-anchor="start">2</text><text transform="translate(806 429.2) rotate(90)" font-size="9.4" text-anchor="start">5</text><text transform="translate(806 441.5) rotate(90)" font-size="9.4" text-anchor="start">4</text><text transform="translate(818 300) scale(1 1.4)" font-size="9.5" text-anchor="start" textLength="7" lengthAdjust="spacingAndGlyphs">A</text><text transform="translate(818.3 374.5) scale(1 1.3)" font-size="9.5" text-anchor="start" textLength="7" lengthAdjust="spacingAndGlyphs">C</text><text transform="translate(818 417.5) scale(1 1.4)" font-size="9.5" text-anchor="start" textLength="7" lengthAdjust="spacingAndGlyphs">B</text><text transform="translate(818 444.5) scale(1 1.4)" font-size="9.5" text-anchor="start" textLength="7" lengthAdjust="spacingAndGlyphs">D</text><text transform="translate(760.3 546) rotate(90)" font-size="8.1" text-anchor="start">3</text><text transform="translate(772.5 546) rotate(90)" font-size="8.1" text-anchor="start">2</text><text transform="translate(784.7 546) rotate(90)" font-size="8.1" text-anchor="start">1</text><text transform="translate(797 549)" font-size="8.8" text-anchor="start">⊥</text><text transform="translate(659 492)" font-size="6.9" text-anchor="start">1</text><text transform="translate(659 503)" font-size="6.9" text-anchor="start">2</text></g>
</svg>
</div>
<div id="vsb"><div class="sbb" style="left:-1px;top:0"></div><div class="sbb" style="left:-1px;top:512px"></div></div>
<div id="hsb"><div class="sbb" style="left:0;top:-1px"></div><div class="sbb" style="left:1186px;top:-1px"></div></div>
<div class="hl" style="top:682px;background:#cfcbc5;width:64px"></div>
<div class="hl" style="top:715px;background:#35507a;height:1px"></div>
<svg id="chrome" width="1280" height="716" viewBox="0 0 1280 716" shape-rendering="crispEdges">
<defs>
<pattern id="dith" width="2" height="2" patternUnits="userSpaceOnUse"><rect width="2" height="2" fill="#808080"/><rect width="1" height="1" fill="#000"/><rect x="1" y="1" width="1" height="1" fill="#000"/></pattern>
<pattern id="dithy" width="2" height="2" patternUnits="userSpaceOnUse"><rect width="2" height="2" fill="#ffff00"/><rect width="1" height="1" fill="#808000"/><rect x="1" y="1" width="1" height="1" fill="#808000"/></pattern>
<g id="arr"><path d="M0 0h8l-4 4z" fill="#000"/></g>
<g id="lens" shape-rendering="auto"><circle cx="0" cy="0" r="5.200" fill="#f4f2ee" stroke="#000" stroke-width="1.100"/><path d="M4.200 4.200l4.300 4.300" stroke="#000" stroke-width="3.200" stroke-linecap="square"/><path d="M4.600 4.600l4.100 4.100" stroke="#e8e800" stroke-width="1.500"/></g>
</defs>
<!-- title icon -->
<rect x="4" y="4" width="14" height="13.500" fill="#008a00"/><rect x="17" y="5" width="1" height="12.500" fill="#005000"/><rect x="5" y="16.500" width="13" height="1" fill="#004800"/>
<rect x="10" y="6" width="5" height="3" fill="#d8d8f8"/><rect x="7" y="12" width="4" height="2.500" fill="#c8c8f0"/><rect x="7" y="14.500" width="4" height="1" fill="#30b030"/>
<path d="M6 12h2l1-3h1M10.500 9v3M12 10.500h1.500l1.500 3" fill="none" stroke="#00e000" stroke-width="1" shape-rendering="auto"/>
<rect x="4.500" y="6" width="1.500" height="1.500" fill="#704000"/><rect x="4.500" y="8.500" width="1.500" height="1.500" fill="#704000"/><rect x="4.500" y="11" width="1.500" height="1" fill="#704000"/><rect x="14" y="12" width="2" height="1.500" fill="#806000"/><rect x="14" y="14" width="2" height="1.500" fill="#60c000"/>
<!-- window buttons glyphs -->
<g fill="#fff" stroke="#3a5f9e" stroke-width=".8"><rect x="1222.500" y="12.500" width="8" height="3"/></g>
<rect x="1244" y="8" width="7" height="7" fill="#fff" stroke="#3a5f9e" stroke-width=".8"/><rect x="1246" y="11" width="3" height="2" fill="#3a5f9e"/>
<g shape-rendering="auto"><path d="M1264.500 7.500l8 8M1272.500 7.500l-8 8" stroke="#3a5f9e" stroke-width="3.600"/><path d="M1265 8l7 7M1272 8l-7 7" stroke="#fff" stroke-width="2.200"/></g>
<!-- grips -->
<g fill="#c8c4be"><rect x="4" y="57" width="5" height="1"/><rect x="4" y="59" width="5" height="1"/><rect x="4" y="61" width="5" height="1"/><rect x="4" y="63" width="5" height="1"/><rect x="4" y="65" width="5" height="1"/><rect x="4" y="67" width="5" height="1"/><rect x="4" y="69" width="5" height="1"/><rect x="4" y="71" width="5" height="1"/>
<rect x="4" y="88" width="5" height="1"/><rect x="4" y="90" width="5" height="1"/><rect x="4" y="92" width="5" height="1"/><rect x="4" y="94" width="5" height="1"/><rect x="4" y="96" width="5" height="1"/><rect x="4" y="98" width="5" height="1"/><rect x="4" y="100" width="5" height="1"/><rect x="4" y="102" width="5" height="1"/></g>
<g fill="#c0bcb6"><path d="M14 116h1v4h-1zM16 116h1v4h-1zM18 116h1v4h-1zM20 116h1v4h-1zM22 116h1v4h-1zM24 116h1v4h-1zM26 116h1v4h-1zM28 116h1v4h-1zM30 116h1v4h-1zM32 116h1v4h-1zM34 116h1v4h-1zM36 116h1v4h-1zM38 116h1v4h-1zM40 116h1v4h-1zM42 116h1v4h-1zM44 116h1v4h-1zM46 116h1v4h-1zM48 116h1v4h-1z"/></g>
<!-- toolbar separators -->
<g fill="#cfcbc5"><rect x="131" y="57" width="1" height="17"/><rect x="168" y="57" width="1" height="17"/><rect x="205" y="57" width="1" height="17"/><rect x="271" y="57" width="1" height="17"/><rect x="424" y="57" width="1" height="17"/><rect x="490" y="57" width="1" height="17"/><rect x="556" y="57" width="1" height="17"/></g>
<g fill="#fff"><rect x="132" y="57" width="1" height="17"/><rect x="169" y="57" width="1" height="17"/><rect x="206" y="57" width="1" height="17"/><rect x="272" y="57" width="1" height="17"/><rect x="425" y="57" width="1" height="17"/><rect x="491" y="57" width="1" height="17"/><rect x="557" y="57" width="1" height="17"/></g>
<!-- open -->
<path d="M18 60h5l1 2h6v2h3l-3 7h-12z" fill="#000"/><path d="M19 61h4l1 2h5v1h-8l-2 5z" fill="#ffff00"/><path d="M22 65h10l-2.500 5h-10z" fill="url(#dithy)"/><use href="#arr" x="25" y="69"/>
<!-- save -->
<rect x="47" y="58" width="14" height="14" fill="#000"/><rect x="48" y="59" width="12" height="12" fill="#0000ff"/><rect x="50" y="59" width="8" height="6" fill="#b0b0b0"/><rect x="51" y="67" width="7" height="4" fill="#000"/><rect x="56" y="68" width="2" height="3" fill="#b0b0b0"/><rect x="59" y="59" width="1" height="1" fill="#fff"/>
<!-- print -->
<g shape-rendering="auto"><path d="M79 58.500h9l-2 5h-9z" fill="#fff" stroke="#000" stroke-width="1.200"/><path d="M80 60.500h6M79.500 62h5" stroke="#000" stroke-width=".8"/><path d="M75.500 66l2-2.500h10.500l2.500 1.500v5l-2 2h-11l-2-1.500z" fill="#fff" stroke="#000" stroke-width="1.300"/><path d="M76 69.500h12" stroke="#000"/><rect x="77" y="67" width="2" height="2" fill="#0000ff"/><rect x="79.500" y="67" width="2" height="2" fill="#ff0000"/><rect x="82" y="67" width="4" height="2" fill="#e8e800"/><circle cx="88.500" cy="65.500" r="1.300" fill="#888"/></g>
<!-- cam -->
<rect x="110" y="57" width="9" height="12" fill="#000"/><rect x="110" y="59" width="9" height="8" fill="#00e8e8"/><rect x="105" y="61" width="9" height="12" fill="#000"/><rect x="105" y="63" width="9" height="8" fill="#00e8e8"/><g fill="#fff"><rect x="111" y="57.500" width="1" height="1"/><rect x="113" y="57.500" width="1" height="1"/><rect x="115" y="57.500" width="1" height="1"/><rect x="117" y="57.500" width="1" height="1"/><rect x="111" y="67.500" width="1" height="1"/><rect x="113" y="67.500" width="1" height="1"/><rect x="115" y="67.500" width="1" height="1"/><rect x="117" y="67.500" width="1" height="1"/><rect x="106" y="61.500" width="1" height="1"/><rect x="108" y="61.500" width="1" height="1"/><rect x="110" y="61.500" width="1" height="1"/><rect x="112" y="61.500" width="1" height="1"/><rect x="106" y="71.500" width="1" height="1"/><rect x="108" y="71.500" width="1" height="1"/><rect x="110" y="71.500" width="1" height="1"/><rect x="112" y="71.500" width="1" height="1"/><rect x="113" y="61" width="2" height="2" opacity=".7"/><rect x="107" y="65" width="2" height="3" opacity=".7"/></g>
<!-- board/sch -->
<g shape-rendering="auto" fill="none"><path d="M143 59.500h3M143 62.500h3M146 58v6h2.500a3 3 0 0 0 0-6zM151.500 61h2" stroke="#000" stroke-width="1.200"/><rect x="145.500" y="66" width="5" height="5.500" stroke="#909090" stroke-width="1.200"/><path d="M143.500 67.500h2M143.500 70h2M150.500 67.500h2M150.500 70h2" stroke="#909090"/></g>
<!-- library -->
<g shape-rendering="auto"><path d="M178 62l4-4.500 2 1v8.500l-3.500 3.500-2.500-1.500z" fill="#808000"/><path d="M178 62l4-4.500 1 .5-4 4.500z" fill="#e8e800"/><path d="M179 62.500v7l1.800 1v-7z" fill="#0000c0"/><path d="M184.500 60.500l5.500-2.500 3 1v8l-6 3.500-2.500-1z" fill="#808000"/><path d="M184.500 60.500l5.500-2.500 3 1-5.800 2.500z" fill="#e8e800"/><path d="M187.200 61.500v9l5.800-3.500v-8z" fill="#c8c800"/><path d="M184.500 60.500v9l2.500 1v-9z" fill="#0000c0"/><path d="M181.500 63v7l2 .5v-7z" fill="#0000c0"/></g>
<!-- SCR / ULP -->
<g font-family="'Liberation Sans',sans-serif" font-weight="bold" font-size="7.800" fill="#000" shape-rendering="auto"><text x="217" y="63.800" textLength="13" lengthAdjust="spacingAndGlyphs">SCR</text><text x="246" y="63.800" textLength="13" lengthAdjust="spacingAndGlyphs">ULP</text></g>
<g stroke="#000" stroke-dasharray="1 1" fill="none"><path d="M215.500 58v13M230.500 58v9M244.500 58v13M259.500 58v9"/></g>
<g fill="#000"><rect x="217" y="66" width="4" height="1"/><rect x="222" y="66" width="3" height="1"/><rect x="226" y="66" width="3" height="1"/><rect x="217" y="68" width="3" height="1"/><rect x="221" y="68" width="5" height="1"/><rect x="217" y="70" width="6" height="1"/>
<rect x="246" y="66" width="4" height="1"/><rect x="251" y="66" width="3" height="1"/><rect x="255" y="66" width="3" height="1"/><rect x="246" y="68" width="3" height="1"/><rect x="250" y="68" width="5" height="1"/><rect x="246" y="70" width="6" height="1"/></g>
<use href="#arr" x="224" y="69"/><use href="#arr" x="253" y="69"/>
<!-- zooms -->
<use href="#lens" x="286.500" y="62.500"/><rect x="283.500" y="60.500" width="6" height="4" fill="none" stroke="#0000ff"/><rect x="283.500" y="60.500" width="6" height="4" fill="none" stroke="#ff0000" stroke-dasharray="1 1"/>
<use href="#lens" x="315.500" y="62.500"/><path d="M312 62.500h7M315.500 59v7" stroke="#0000ff"/><path d="M312 62.500h7M315.500 59v7" stroke="#ff0000" stroke-dasharray="1 1"/><path d="M312 70.500h3M313.500 69v3" stroke="#ff0000"/>
<use href="#lens" x="344.500" y="62.500"/><path d="M343 62.500h3" stroke="#ff0000"/><path d="M339 70.500h7" stroke="#ff0000"/><path d="M339 70.500h7" stroke="#0000ff" stroke-dasharray="1 1"/>
<rect x="398.500" y="60.500" width="12" height="10" fill="#fff" stroke="#000" stroke-width="1"/>
<use href="#lens" x="373.500" y="62.500"/><path d="M371 61.500h5M371 63.500h5M369 69.500h5M369 71.500h5" stroke="#ff0000"/><path d="M371 61.500h5M371 63.500h5M369 69.500h5M369 71.500h5" stroke="#0000ff" stroke-dasharray="1 1"/>
<use href="#lens" x="402.500" y="62.500"/><rect x="400.500" y="60.500" width="4" height="4" fill="none" stroke="#0000ff"/><rect x="400.500" y="60.500" width="4" height="4" fill="none" stroke="#ff0000" stroke-dasharray="1 1"/><path d="M407 70l3-3 3 3-3 3z" fill="#000" shape-rendering="auto"/>
<!-- undo/redo -->
<g shape-rendering="auto" fill="none"><path d="M438.500 65.500a4.500 4.500 0 1 1 8 3" stroke="#fff" stroke-width="1.400" transform="translate(1 1)"/><path d="M438.500 65.500a4.500 4.500 0 1 1 8 3" stroke="#808080" stroke-width="1.400"/><path d="M436 62v5.500h5.500z" fill="#808080" stroke="none"/>
<path d="M476.500 65.500a4.500 4.500 0 1 0-8 3" stroke="#fff" stroke-width="1.400" transform="translate(1 1)"/><path d="M476.500 65.500a4.500 4.500 0 1 0-8 3" stroke="#808080" stroke-width="1.400"/><path d="M479 62v5.500h-5.500z" fill="#808080" stroke="none"/></g>
<!-- stop -->
<g shape-rendering="auto"><path d="M504.700 57h6.600l4.700 4.700v6.600l-4.700 4.700h-6.600l-4.700-4.700v-6.600z" fill="#808080"/><text x="500.800" y="68" font-family="'Liberation Sans',sans-serif" font-weight="bold" font-size="8.500" fill="#fff" textLength="14.500" lengthAdjust="spacingAndGlyphs">STOP</text></g>
<!-- go -->
<rect x="533" y="57" width="8" height="16" fill="url(#dith)"/><circle cx="537" cy="61" r="1.500" fill="#a0a0a0" shape-rendering="auto"/><circle cx="537" cy="65.500" r="1.500" fill="#a0a0a0" shape-rendering="auto"/><circle cx="537" cy="70" r="2" fill="#00a000" shape-rendering="auto"/>
<!-- help -->
<g shape-rendering="auto" font-family="'Liberation Sans',sans-serif" font-weight="bold" font-size="18"><text x="569.800" y="72.800" fill="#000">?</text><text x="568.800" y="71.800" fill="#f0f000">?</text></g>
<!-- grid -->
<g fill="#000"><path d="M18 89h1v1h-1zM21 89h1v1h-1zM24 89h1v1h-1zM27 89h1v1h-1zM30 89h1v1h-1zM18 92h1v1h-1zM21 92h1v1h-1zM24 92h1v1h-1zM27 92h1v1h-1zM30 92h1v1h-1zM18 95h1v1h-1zM21 95h1v1h-1zM24 95h1v1h-1zM27 95h1v1h-1zM30 95h1v1h-1zM18 98h1v1h-1zM21 98h1v1h-1zM24 98h1v1h-1zM27 98h1v1h-1zM30 98h1v1h-1zM18 101h1v1h-1zM21 101h1v1h-1zM24 101h1v1h-1z"/></g><use href="#arr" x="25" y="100"/>
<!--LEFTSTART--><g fill="#d4d0ca"><rect x="7" y="191" width="50" height="1"/><rect x="7" y="551" width="50" height="1"/></g><g fill="#fff"><rect x="7" y="192" width="50" height="1"/><rect x="7" y="552" width="50" height="1"/></g>
<!-- info -->
<g shape-rendering="auto"><circle cx="16" cy="134.800" r="1.900" fill="#000"/><path d="M13.500 138.500h4.500v6h1.500v1.500h-6.500v-1.500h1.500v-4.500h-1.500z" fill="#000"/>
<!-- eye -->
<path d="M39.500 138c3-4 6-5.500 8-5.500s5.500 1.500 7.500 5.500c-2.500 3.500-5 5-7.500 5s-5.500-1.500-8-5z" fill="#fff" stroke="#808000" stroke-width="1.200"/><circle cx="47" cy="137.800" r="3.300" fill="#00e0f0"/><circle cx="47" cy="137.800" r="1.500" fill="#000"/></g>
<!-- display -->
<rect x="9" y="164" width="8" height="8" fill="#000090"/><rect x="12" y="166" width="8" height="8" fill="#900000"/><rect x="9" y="164" width="8" height="8" fill="#000090"/><rect x="15" y="168" width="8" height="8" fill="#007000"/><rect x="12" y="166" width="8" height="8" fill="#900000"/><rect x="9" y="164" width="8" height="8" fill="#000090"/><use href="#arr" x="16.500" y="175"/>
<!-- mark -->
<g fill="#000"><rect x="40" y="164" width="1" height="14"/><rect x="40" y="176" width="14" height="1"/><path d="M39 165h3v1h-3zM39 167h3v1h-3zM39 169h3v1h-3zM39 171h3v1h-3zM39 173h3v1h-3zM43 175h1v3h-1zM45 175h1v3h-1zM47 175h1v3h-1zM49 175h1v3h-1zM51 175h1v3h-1zM44 170h5v1h-5zM46 168h1v5h-1z"/></g>
<g fill="none" stroke="#000"><rect x="47.500" y="163.500" width="2" height="3"/><rect x="51.500" y="163.500" width="2" height="3"/></g>
<!-- move -->
<g shape-rendering="auto" fill="#000"><path d="M15 205h1.400v11h-1.400zM10 210h11v1.400h-11z"/><path d="M15.700 202.500l3 3.500h-6zM15.700 218.500l3-3.500h-6zM7.700 210.700l3.500-3v6zM23.700 210.700l-3.500-3v6z"/>
<!-- copy -->
<g fill="none" stroke="#000" stroke-width="1.100"><circle cx="42.500" cy="206.300" r="1.500"/><path d="M42.500 208v4.500M39.500 209.500h6M42.500 212.500l-2.300 4.500M42.500 212.500l2.300 4.500"/><circle cx="51.500" cy="206.300" r="1.500"/><path d="M51.500 208v4.500M48.500 209.500h6M51.500 212.500l-2.300 4.500M51.500 212.500l2.300 4.500"/></g></g>
<!-- mirror -->
<g fill="none" stroke="#000" stroke-width="1.300"><path d="M13 239.700h-3.300v7.600h3.300M9.700 243.500h3M18 239.700h3.300v7.600h-3.300M21.300 243.500h-3"/></g><path d="M15.500 236v16" stroke="#000" stroke-dasharray="1 1"/>
<!-- rotate -->
<rect x="39" y="244" width="12" height="3" fill="#808080"/><rect x="43" y="239" width="3" height="13" fill="#000"/><g shape-rendering="auto"><path d="M46.500 236.500c4 .5 6.500 3.500 7 7.500" fill="none" stroke="#000" stroke-width="1.100"/><path d="M44.500 236.500l3.500-2.500v4.500z" fill="#000"/></g>
<!-- group -->
<rect x="9.500" y="268.500" width="13" height="13" fill="none" stroke="#000" stroke-width="1.300" stroke-dasharray="3 2"/>
<!-- wrench -->
<g shape-rendering="auto"><path d="M40.500 280.500l7-6.500" stroke="#000" stroke-width="4" stroke-linecap="round"/><path d="M40.500 280.500l7-6.500" stroke="#707070" stroke-width="2.600" stroke-linecap="round"/><path d="M46 270.500l3.500-1.500-1 3.500 3.500 1 1.500-2.500 .5 3.500-3 2.500-4-1-1.500-3z" fill="#707070" stroke="#000" stroke-width=".8"/></g>
<!-- scissors -->
<g shape-rendering="auto" fill="none" stroke="#000"><path d="M22 300l-7.500 9.500" stroke-width="2.200"/><path d="M24 307l-11.500 3" stroke-width="2.200"/><ellipse cx="11.500" cy="308.500" rx="2" ry="1.600" stroke-width="1.100" fill="#fff"/><ellipse cx="14.500" cy="312.500" rx="1.600" ry="2.300" stroke-width="1.100" fill="#fff"/></g>
<!-- paste -->
<g shape-rendering="auto"><path d="M42.500 301l10 10" stroke="#000" stroke-width="2.600"/><path d="M43 300.500l10 10" stroke="#a0a0a0" stroke-width=".8"/><path d="M48 307l2 2.500 3.500 2v3.500h-10.500v-1l4-2.500z" fill="#ffff00"/></g>
<!-- delete -->
<g shape-rendering="auto"><path d="M9.500 333l10.500 10.500" stroke="#000" stroke-width="2.300"/><path d="M21.500 332.500l-11.500 11" stroke="#000" stroke-width="2.300"/><circle cx="12.500" cy="343" r=".8" fill="#e0e000"/><rect x="21" y="344" width="1" height="1" fill="#000"/></g>
<!-- add -->
<g shape-rendering="auto" fill="none" stroke="#800000" stroke-width="1.200"><path d="M44 334v9h3.500a4.500 4.500 0 0 0 0-9zM41 336h3M41 341h3M52 338.500h2"/><path d="M47.500 338l6.500 5.500-2.800.3 1.600 2.500-1.200.8-1.600-2.600-2 2z" fill="#000" stroke="#000" stroke-width=".6"/></g>
<!-- pinswap -->
<g shape-rendering="auto"><path d="M10 367v9" stroke="#000" stroke-width="1.200"/><path d="M10 364.500l2.500 3.500h-5zM10 378.500l2.500-3.500h-5z" fill="#000"/><path d="M14 368.500h4M14 375h4M18 364.500h3.500l2.500 3.500v7l-2.500 3.500h-3.500" fill="none" stroke="#800000" stroke-width="1.200"/><path d="M18 364.500v14" stroke="#800000" stroke-width="0"/></g>
<!-- replace -->
<g shape-rendering="auto"><rect x="40.300" y="368.500" width="2.600" height="5" fill="#fff" stroke="#000" stroke-width="1.200"/><rect x="50.300" y="367.500" width="2.800" height="6" fill="#fff" stroke="#000" stroke-width="1.200"/><path d="M44 371h4.500" stroke="#000" stroke-width="1.100"/><path d="M49.500 371l-2-1.600v3.200z" fill="#000"/><circle cx="41.600" cy="366.500" r="1.300" fill="#008000"/><circle cx="41.600" cy="375.500" r="1.300" fill="#008000"/><circle cx="51.700" cy="365.500" r="1.600" fill="#008000"/><path d="M47.500 375.500h8.500l-4.200 4z" fill="#000"/></g>
<!-- lock -->
<g shape-rendering="auto"><path d="M12.500 401v-2.500a3 3 0 0 1 6 0v2.500" fill="none" stroke="#a0a0a0" stroke-width="1.800"/><rect x="10.500" y="400.500" width="10.500" height="9" fill="#909090" stroke="#707070"/><path d="M15.800 402.500l2.700 3h-1.700v3h-2v-3h-1.700z" fill="#000"/></g>
<!-- name / value -->
<g shape-rendering="auto" font-family="'Liberation Sans',sans-serif" font-weight="bold" font-size="7"><text x="11" y="432.600" fill="#000" textLength="10.500" lengthAdjust="spacingAndGlyphs">R2</text><text x="11" y="442.800" fill="#909090" textLength="11" lengthAdjust="spacingAndGlyphs">10k</text><text x="42" y="432.600" fill="#909090" textLength="10.500" lengthAdjust="spacingAndGlyphs">R2</text><text x="42" y="442.800" fill="#000" textLength="11" lengthAdjust="spacingAndGlyphs">10k</text></g>
<g fill="#800000"><rect x="9" y="435" width="14" height="1"/><rect x="40" y="435" width="14" height="1"/><rect x="12" y="434" width="8" height="3"/><rect x="43" y="434" width="8" height="3"/></g><g fill="#fff"><rect x="13" y="435" width="6" height="1"/><rect x="44" y="435" width="6" height="1"/></g>
<!-- smash -->
<g shape-rendering="auto"><rect x="10.500" y="462.500" width="10" height="8" fill="#fff" stroke="#000" stroke-width="1.300"/><path d="M12 465.500h7M12 467.500h7" stroke="#808080" stroke-dasharray="1.500 1"/><path d="M14.500 461v1.500M16.500 460.500v2M18.500 461v1.500" stroke="#000"/><path d="M15 472.500h6M16 474v-1.500M18.500 474v-1.500M20.500 474v-1.500" stroke="#000" stroke-width=".9"/><path d="M9.500 466h1.500" stroke="#000"/></g>
<!-- miter -->
<g shape-rendering="auto"><path d="M41.500 461.500h8c-5 1-7.500 4-8 8.500z" fill="#a0a0a0"/><path d="M41.500 474v-4c.5-4.500 4-8 8.500-8.500h4" fill="none" stroke="#000" stroke-width="2"/>
<!-- split -->
<path d="M10.500 505l2.500-9.500 9.500-2.500z" fill="#a0a0a0"/><path d="M10 506l2.800-10.500 10.200-2.800" fill="none" stroke="#000" stroke-width="2" stroke-linejoin="round"/>
<!-- optimize -->
<path d="M40.500 505.500l13-12.500" stroke="#000" stroke-width="2"/><path d="M48.500 502.500h5M51 500v5" stroke="#000" stroke-width="1.100"/>
<!-- route -->
<path d="M10.500 524.500h5" stroke="#0000ff" stroke-width="1.800"/><path d="M16 524.500v6" stroke="#ff0000" stroke-width="1.800"/><path d="M16 530.500l5.500 5.500" stroke="#808000" stroke-width="1.800"/><circle cx="9.500" cy="524.500" r="1.700" fill="#008000"/><circle cx="22" cy="536.500" r="1.700" fill="#008000"/>
<!-- ripup -->
<path d="M42 524.500h4.500v7l5.500 5" fill="none" stroke="#c00000" stroke-width="1.300" stroke-dasharray="1.300 1"/><path d="M47.500 525v6l4.500 4.500" fill="none" stroke="#0000c0" stroke-width="1" stroke-dasharray="1 1.300"/><path d="M41 524l11.500 12.500" stroke="#808000" stroke-width="1.600"/><circle cx="41" cy="523.800" r="1.700" fill="#008000"/><circle cx="53" cy="536.800" r="1.700" fill="#008000"/>
<!-- wire -->
<path d="M9.500 577.500l13-13" stroke="#000" stroke-width="2"/>
<!-- text -->
<text x="40.300" y="577.300" font-family="'Liberation Serif',serif" font-weight="bold" font-size="19" fill="#000">T</text>
<!-- circle -->
<circle cx="16" cy="603" r="6.300" fill="none" stroke="#000" stroke-width="2"/>
<!-- arc -->
<path d="M41.500 600a6.300 6.300 0 1 1 9.500 8.500" fill="none" stroke="#000" stroke-width="2"/>
<!-- more -->
<path d="M29.500 672.500l2.500 3 2.500-3M29.500 677l2.500 3 2.500-3" fill="none" stroke="#000" stroke-width="1.500"/></g>
<!-- rect / polygon -->
<rect x="9" y="629" width="14" height="12" fill="url(#dith)"/><path d="M40 642v-8l4-4h2.500l3-3h3.500v15z" fill="url(#dith)"/>
<!--LEFTEND-->
<!-- combobox arrow & scrollbars arrows -->
<g shape-rendering="auto"><path d="M1266 123.500l4 4 4-4" fill="none" stroke="#000" stroke-width="2"/><path d="M1268 151l4-5 4 5z" fill="#000"/><path d="M1268 659l4 5 4-5z" fill="#000"/><path d="M74 671l-5 4.500 5 4.500z" fill="#000"/><path d="M1256 671l5 4.500-5 4.500z" fill="#000"/></g>
<g fill="#b0aca6"><rect x="1270" y="402" width="5" height="1"/><rect x="1270" y="404" width="5" height="1"/><rect x="1270" y="406" width="5" height="1"/><rect x="660" y="673" width="1" height="5"/><rect x="662" y="673" width="1" height="5"/><rect x="664" y="673" width="1" height="5"/></g>
</svg>

</body></html>
